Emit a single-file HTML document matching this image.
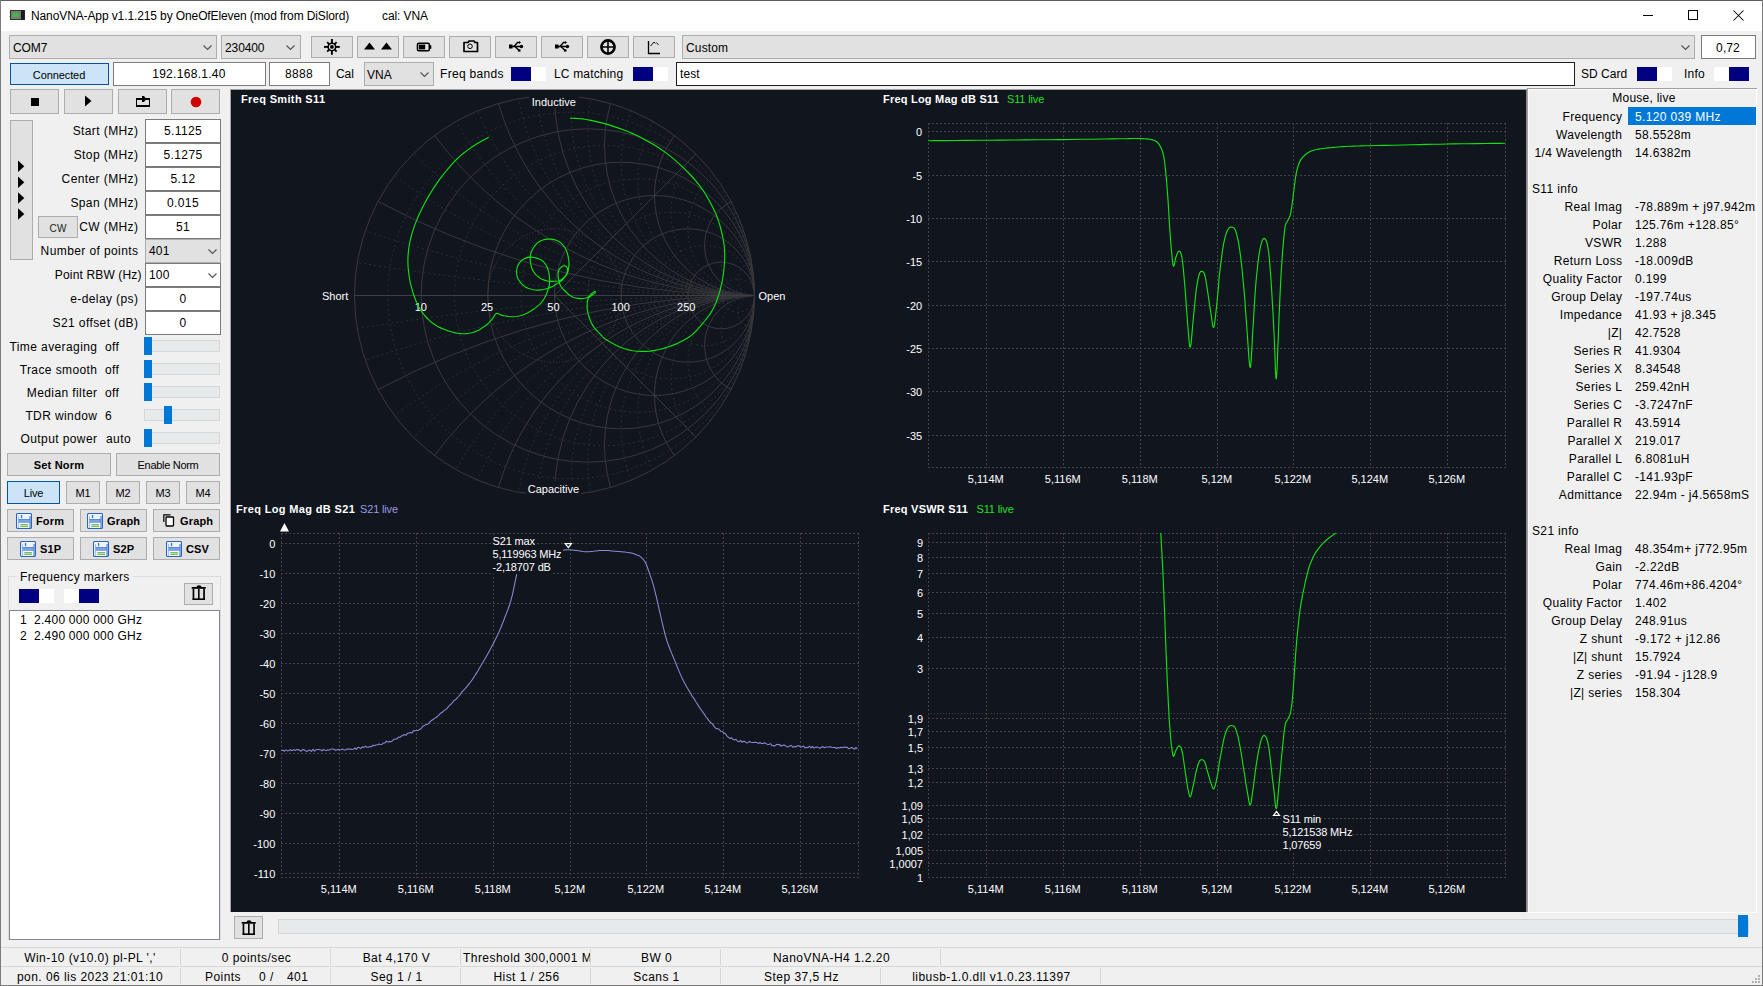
<!DOCTYPE html><html><head><meta charset="utf-8"><title>NanoVNA-App</title><style>html,body{margin:0;padding:0;width:1763px;height:986px;overflow:hidden;background:#f0f0f0}.t{position:absolute;white-space:pre;line-height:20px;font-family:'Liberation Sans',sans-serif;color:#000}.r{position:absolute;box-sizing:border-box}svg text{font-family:'Liberation Sans',sans-serif}</style></head><body>
<div class="r" style="left:0px;top:0px;width:1763px;height:986px;background:#f0f0f0;"></div>
<div class="r" style="left:1px;top:1px;width:1761px;height:30px;background:#fff;"></div>
<div class="r" style="left:0px;top:0px;width:1763px;height:1px;background:#5c5c5c;"></div>
<div class="r" style="left:0px;top:0px;width:1px;height:986px;background:#7b7b7b;"></div>
<div class="r" style="left:1762px;top:0px;width:1px;height:986px;background:#7b7b7b;"></div>
<div class="r" style="left:0px;top:985px;width:1763px;height:1px;background:#7b7b7b;"></div>
<svg class="r" style="left:9px;top:9px;" width="18" height="13" viewBox="0 0 18 13"><rect x="1.5" y="1.5" width="14" height="9" fill="#7a7a7a" stroke="#333" stroke-width="1"/><rect x="12" y="1.5" width="3.5" height="9" fill="#1a1a1a"/><path d="M3.5 8 L5 4 L6 8 L7.5 4 L8.5 8 L10 4" fill="none" stroke="#3fbf3f" stroke-width="1.2"/><rect x="0" y="3" width="1" height="1" fill="#d9c040"/><rect x="0" y="7" width="1" height="1" fill="#d9c040"/></svg>
<div class="t" style="left:31px;top:6px;font-size:12px;letter-spacing:-0.11px;">NanoVNA-App v1.1.215 by OneOfEleven (mod from DiSlord)</div>
<div class="t" style="left:382px;top:6px;font-size:12px;letter-spacing:-0.1px;">cal: VNA</div>
<svg class="r" style="left:1640px;top:8px;" width="110" height="16" viewBox="0 0 110 16"><rect x="3" y="7" width="10" height="1" fill="#000"/><rect x="48.5" y="2.5" width="9" height="9" fill="none" stroke="#000" stroke-width="1"/><path d="M93.5 2.5 L103.5 12.5 M103.5 2.5 L93.5 12.5" stroke="#000" stroke-width="1.05"/></svg>
<div class="r" style="left:9px;top:35px;width:208px;height:24px;background:#e1e1e1;border:1px solid #adadad;"></div>
<div class="t" style="left:13px;top:38px;font-size:12px;letter-spacing:-0.1px;">COM7</div>
<svg class="r" style="left:203px;top:45px" width="10" height="6"><polyline points="0.5,0.5 4.5,4.5 8.5,0.5" fill="none" stroke="#505050" stroke-width="1.1"/></svg>
<div class="r" style="left:221px;top:35px;width:80px;height:24px;background:#e1e1e1;border:1px solid #adadad;"></div>
<div class="t" style="left:225px;top:38px;font-size:12px;letter-spacing:-0.1px;">230400</div>
<svg class="r" style="left:286px;top:45px" width="10" height="6"><polyline points="0.5,0.5 4.5,4.5 8.5,0.5" fill="none" stroke="#505050" stroke-width="1.1"/></svg>
<div class="r" style="left:311px;top:36px;width:42px;height:22px;background:#e1e1e1;border:1px solid #adadad;"></div>
<div class="r" style="left:357px;top:36px;width:42px;height:22px;background:#e1e1e1;border:1px solid #adadad;"></div>
<div class="r" style="left:403px;top:36px;width:42px;height:22px;background:#e1e1e1;border:1px solid #adadad;"></div>
<div class="r" style="left:449px;top:36px;width:42px;height:22px;background:#e1e1e1;border:1px solid #adadad;"></div>
<div class="r" style="left:495px;top:36px;width:42px;height:22px;background:#e1e1e1;border:1px solid #adadad;"></div>
<div class="r" style="left:541px;top:36px;width:42px;height:22px;background:#e1e1e1;border:1px solid #adadad;"></div>
<div class="r" style="left:587px;top:36px;width:42px;height:22px;background:#e1e1e1;border:1px solid #adadad;"></div>
<div class="r" style="left:633px;top:36px;width:42px;height:22px;background:#e1e1e1;border:1px solid #adadad;"></div>
<svg class="r" style="left:311px;top:36px;" width="42" height="22" viewBox="0 0 42 22"><g transform="translate(20.9,10.9)"><rect x="-0.95" y="-7.9" width="1.9" height="4.6" fill="#000" transform="rotate(0)"/><rect x="-0.9" y="-6.7" width="1.8" height="3.4" fill="#000" transform="rotate(45)"/><rect x="-0.95" y="-7.9" width="1.9" height="4.6" fill="#000" transform="rotate(90)"/><rect x="-0.9" y="-6.7" width="1.8" height="3.4" fill="#000" transform="rotate(135)"/><rect x="-0.95" y="-7.9" width="1.9" height="4.6" fill="#000" transform="rotate(180)"/><rect x="-0.9" y="-6.7" width="1.8" height="3.4" fill="#000" transform="rotate(225)"/><rect x="-0.95" y="-7.9" width="1.9" height="4.6" fill="#000" transform="rotate(270)"/><rect x="-0.9" y="-6.7" width="1.8" height="3.4" fill="#000" transform="rotate(315)"/><circle r="3.75" fill="none" stroke="#000" stroke-width="1.5"/><circle r="1.9" fill="#000"/></g></svg>
<svg class="r" style="left:357px;top:36px;" width="42" height="22" viewBox="0 0 42 22"><path d="M7 13.5 L12.5 6.5 L18 13.5Z M24 13.5 L29.5 6.5 L35 13.5Z" fill="#000"/></svg>
<svg class="r" style="left:403px;top:36px;" width="42" height="22" viewBox="0 0 42 22"><rect x="14.5" y="7.2" width="11.8" height="7.6" rx="1.3" fill="none" stroke="#000" stroke-width="1.6"/><rect x="16" y="8.6" width="6.2" height="4.8" fill="#000"/><rect x="26.5" y="9.2" width="1.8" height="3.6" fill="#000"/></svg>
<svg class="r" style="left:449px;top:36px;" width="42" height="22" viewBox="0 0 42 22"><path d="M15 6.5 h4 l1 -1.5 h5 l1 1.5 h2.5 v9 h-13.5z" fill="none" stroke="#000" stroke-width="1.7" stroke-linejoin="round"/><circle cx="21" cy="10.3" r="2.3" fill="none" stroke="#000" stroke-width="1"/></svg>
<svg class="r" style="left:495px;top:36px;" width="42" height="22" viewBox="0 0 42 22"><rect x="14" y="8.5" width="3.5" height="4" fill="#000"/><path d="M17 10.5 H26" stroke="#000" stroke-width="1.6"/><circle cx="26.5" cy="10.5" r="1.7" fill="#000"/><path d="M19 10.5 L22.5 6.5 H24" fill="none" stroke="#000" stroke-width="1.3"/><path d="M24 5 L26 6.5 L24 8z" fill="#000"/><path d="M20 10.5 L24 14.5" fill="none" stroke="#000" stroke-width="1.5"/><rect x="23" y="13.3" width="2.5" height="2.3" fill="#000"/></svg>
<svg class="r" style="left:541px;top:36px;" width="42" height="22" viewBox="0 0 42 22"><rect x="14" y="8.5" width="3.5" height="4" fill="#000"/><path d="M17 10.5 H26" stroke="#000" stroke-width="1.6"/><circle cx="26.5" cy="10.5" r="1.7" fill="#000"/><path d="M19 10.5 L22.5 6.5 H24" fill="none" stroke="#000" stroke-width="1.3"/><path d="M24 5 L26 6.5 L24 8z" fill="#000"/><path d="M20 10.5 L24 14.5" fill="none" stroke="#000" stroke-width="1.5"/><rect x="23" y="13.3" width="2.5" height="2.3" fill="#000"/></svg>
<svg class="r" style="left:587px;top:36px;" width="42" height="22" viewBox="0 0 42 22"><circle cx="21" cy="11" r="6.6" fill="none" stroke="#000" stroke-width="2.6"/><path d="M21 4.5 V17.5 M14.5 11 H27.5" stroke="#000" stroke-width="1.6"/></svg>
<svg class="r" style="left:633px;top:36px;" width="42" height="22" viewBox="0 0 42 22"><path d="M15.5 5 V17.5 H27" fill="none" stroke="#000" stroke-width="1.3"/><path d="M17.5 10 L21 6 L22.5 7.5 M23.5 6.5 L25.5 9" fill="none" stroke="#000" stroke-width="0.9"/></svg>
<div class="r" style="left:682px;top:35px;width:1013px;height:24px;background:#e1e1e1;border:1px solid #adadad;"></div>
<div class="t" style="left:686px;top:38px;font-size:12px;letter-spacing:0.15px;">Custom</div>
<svg class="r" style="left:1681px;top:45px" width="10" height="6"><polyline points="0.5,0.5 4.5,4.5 8.5,0.5" fill="none" stroke="#505050" stroke-width="1.1"/></svg>
<div class="r" style="left:1701px;top:35px;width:55px;height:24px;background:#fff;border:1px solid #7a7a7a;"></div>
<div class="t" style="left:1528px;width:400px;text-align:center;top:38px;font-size:12px;letter-spacing:0.1px;">0,72</div>
<div class="r" style="left:10px;top:63px;width:99px;height:22px;background:#cce4f7;border:1px solid #0055a0;"></div>
<div class="t" style="left:-141px;width:400px;text-align:center;top:65px;font-size:11px;letter-spacing:-0.1px;">Connected</div>
<div class="r" style="left:113px;top:62px;width:153px;height:24px;background:#fff;border:1px solid #7a7a7a;"></div>
<div class="t" style="left:-11px;width:400px;text-align:center;top:64px;font-size:12px;letter-spacing:0.3px;">192.168.1.40</div>
<div class="r" style="left:269px;top:62px;width:61px;height:24px;background:#fff;border:1px solid #7a7a7a;"></div>
<div class="t" style="left:99px;width:400px;text-align:center;top:64px;font-size:12px;letter-spacing:0.3px;">8888</div>
<div class="t" style="left:336px;top:64px;font-size:12px;letter-spacing:-0.1px;">Cal</div>
<div class="r" style="left:364px;top:62px;width:70px;height:24px;background:#e1e1e1;border:1px solid #adadad;"></div>
<div class="t" style="left:367px;top:65px;font-size:12px;letter-spacing:0.1px;">VNA</div>
<svg class="r" style="left:420px;top:72px" width="10" height="6"><polyline points="0.5,0.5 4.5,4.5 8.5,0.5" fill="none" stroke="#505050" stroke-width="1.1"/></svg>
<div class="t" style="left:440px;top:64px;font-size:12px;letter-spacing:0.3px;">Freq bands</div>
<div class="r" style="left:511px;top:67px;width:20px;height:14px;background:#000080;"></div>
<div class="r" style="left:531px;top:67px;width:15px;height:14px;background:#fff;"></div>
<div class="t" style="left:554px;top:64px;font-size:12px;letter-spacing:0.17px;">LC matching</div>
<div class="r" style="left:633px;top:67px;width:20px;height:14px;background:#000080;"></div>
<div class="r" style="left:653px;top:67px;width:15px;height:14px;background:#fff;"></div>
<div class="r" style="left:676px;top:62px;width:899px;height:24px;background:#fff;border:1px solid #1e1e1e;"></div>
<div class="t" style="left:680px;top:64px;font-size:12px;letter-spacing:0.1px;">test</div>
<div class="t" style="left:1581px;top:64px;font-size:12px;letter-spacing:0.03px;">SD Card</div>
<div class="r" style="left:1637px;top:67px;width:20px;height:14px;background:#000080;"></div>
<div class="r" style="left:1657px;top:67px;width:15px;height:14px;background:#fff;"></div>
<div class="t" style="left:1684px;top:64px;font-size:12px;letter-spacing:0.2px;">Info</div>
<div class="r" style="left:1714px;top:67px;width:15px;height:14px;background:#fff;"></div>
<div class="r" style="left:1729px;top:67px;width:20px;height:14px;background:#000080;"></div>
<div class="r" style="left:10px;top:89px;width:49px;height:25px;background:#e1e1e1;border:1px solid #adadad;"></div>
<div class="r" style="left:64px;top:89px;width:49px;height:25px;background:#e1e1e1;border:1px solid #adadad;"></div>
<div class="r" style="left:118px;top:89px;width:49px;height:25px;background:#e1e1e1;border:1px solid #adadad;"></div>
<div class="r" style="left:171px;top:89px;width:49px;height:25px;background:#e1e1e1;border:1px solid #adadad;"></div>
<div class="r" style="left:31px;top:98px;width:8px;height:8px;background:#000;"></div>
<svg class="r" style="left:64px;top:89px;" width="49" height="25" viewBox="0 0 49 25"><path d="M21 6.5 L27.5 12 L21 17.5Z" fill="#000"/></svg>
<svg class="r" style="left:118px;top:89px;" width="49" height="25" viewBox="0 0 49 25"><rect x="18" y="9" width="14" height="2" fill="#000"/><rect x="18" y="16" width="14" height="2" fill="#000"/><rect x="18" y="9" width="1" height="9" fill="#000"/><rect x="31" y="9" width="1" height="9" fill="#000"/><path d="M24 7 H26 L27.5 9 V11 L26 13 H24Z" fill="#000"/></svg>
<svg class="r" style="left:171px;top:89px;" width="49" height="25" viewBox="0 0 49 25"><circle cx="25" cy="13" r="5.3" fill="#d00000"/></svg>
<div class="r" style="left:10px;top:120px;width:23px;height:140px;background:#e1e1e1;border:1px solid #adadad;"></div>
<svg class="r" style="left:10px;top:120px;" width="23" height="140" viewBox="0 0 23 140"><path d="M8 40.6 L14.3 46.35 L8 52.1Z" fill="#000"/><path d="M8 56.5 L14.3 62.25 L8 68.0Z" fill="#000"/><path d="M8 72.3 L14.3 78.05 L8 83.8Z" fill="#000"/><path d="M8 88.2 L14.3 93.95 L8 99.7Z" fill="#000"/></svg>
<div class="t" style="right:1625px;top:121px;font-size:12px;letter-spacing:0.4px;margin-right:-0.4px;">Start (MHz)</div>
<div class="r" style="left:145px;top:119px;width:76px;height:24px;background:#fff;border:1px solid #7a7a7a;"></div>
<div class="t" style="left:-17px;width:400px;text-align:center;top:121px;font-size:12px;letter-spacing:0.4px;">5.1125</div>
<div class="t" style="right:1625px;top:145px;font-size:12px;letter-spacing:0.4px;margin-right:-0.4px;">Stop (MHz)</div>
<div class="r" style="left:145px;top:143px;width:76px;height:24px;background:#fff;border:1px solid #7a7a7a;"></div>
<div class="t" style="left:-17px;width:400px;text-align:center;top:145px;font-size:12px;letter-spacing:0.4px;">5.1275</div>
<div class="t" style="right:1625px;top:169px;font-size:12px;letter-spacing:0.4px;margin-right:-0.4px;">Center (MHz)</div>
<div class="r" style="left:145px;top:167px;width:76px;height:24px;background:#fff;border:1px solid #7a7a7a;"></div>
<div class="t" style="left:-17px;width:400px;text-align:center;top:169px;font-size:12px;letter-spacing:0.4px;">5.12</div>
<div class="t" style="right:1625px;top:193px;font-size:12px;letter-spacing:0.4px;margin-right:-0.4px;">Span (MHz)</div>
<div class="r" style="left:145px;top:191px;width:76px;height:24px;background:#fff;border:1px solid #7a7a7a;"></div>
<div class="t" style="left:-17px;width:400px;text-align:center;top:193px;font-size:12px;letter-spacing:0.4px;">0.015</div>
<div class="t" style="right:1625px;top:217px;font-size:12px;letter-spacing:0.4px;margin-right:-0.4px;">CW (MHz)</div>
<div class="r" style="left:145px;top:215px;width:76px;height:24px;background:#fff;border:1px solid #7a7a7a;"></div>
<div class="t" style="left:-17px;width:400px;text-align:center;top:217px;font-size:12px;letter-spacing:0.4px;">51</div>
<div class="t" style="right:1625px;top:241px;font-size:12px;letter-spacing:0.4px;margin-right:-0.4px;">Number of points</div>
<div class="r" style="left:145px;top:239px;width:76px;height:24px;background:#e1e1e1;border:1px solid #adadad;"></div>
<div class="t" style="left:149px;top:241px;font-size:12px;letter-spacing:0.2px;">401</div>
<svg class="r" style="left:208px;top:249px" width="10" height="6"><polyline points="0.5,0.5 4.5,4.5 8.5,0.5" fill="none" stroke="#505050" stroke-width="1.1"/></svg>
<div class="t" style="right:1621.5px;top:265px;font-size:12px;letter-spacing:0.15px;margin-right:-0.15px;">Point RBW (Hz)</div>
<div class="r" style="left:145px;top:263px;width:76px;height:24px;background:#fff;border:1px solid #7a7a7a;"></div>
<div class="t" style="left:149px;top:265px;font-size:12px;letter-spacing:0.2px;">100</div>
<svg class="r" style="left:208px;top:273px" width="10" height="6"><polyline points="0.5,0.5 4.5,4.5 8.5,0.5" fill="none" stroke="#505050" stroke-width="1.1"/></svg>
<div class="t" style="right:1625px;top:289px;font-size:12px;letter-spacing:0.4px;margin-right:-0.4px;">e-delay (ps)</div>
<div class="r" style="left:145px;top:287px;width:76px;height:24px;background:#fff;border:1px solid #7a7a7a;"></div>
<div class="t" style="left:-17px;width:400px;text-align:center;top:289px;font-size:12px;letter-spacing:0.4px;">0</div>
<div class="t" style="right:1625px;top:313px;font-size:12px;letter-spacing:0.4px;margin-right:-0.4px;">S21 offset (dB)</div>
<div class="r" style="left:145px;top:311px;width:76px;height:24px;background:#fff;border:1px solid #7a7a7a;"></div>
<div class="t" style="left:-17px;width:400px;text-align:center;top:313px;font-size:12px;letter-spacing:0.4px;">0</div>
<div class="r" style="left:38px;top:216px;width:40px;height:22px;background:#e1e1e1;border:1px solid #adadad;"></div>
<div class="t" style="left:-142px;width:400px;text-align:center;top:219px;font-size:10px;letter-spacing:0.2px;color:#1a1a1a;">CW</div>
<div class="t" style="right:1666px;top:337px;font-size:12px;letter-spacing:0.4px;margin-right:-0.4px;">Time averaging</div>
<div class="t" style="left:105px;top:337px;font-size:12px;letter-spacing:0.4px;">off</div>
<div class="r" style="left:144px;top:340px;width:76px;height:12px;background:#e7eaea;border:1px solid #d6d6d6;"></div>
<div class="r" style="left:144px;top:337px;width:8px;height:18px;background:#0078d7;"></div>
<div class="t" style="right:1666px;top:360px;font-size:12px;letter-spacing:0.4px;margin-right:-0.4px;">Trace smooth</div>
<div class="t" style="left:105px;top:360px;font-size:12px;letter-spacing:0.4px;">off</div>
<div class="r" style="left:144px;top:363px;width:76px;height:12px;background:#e7eaea;border:1px solid #d6d6d6;"></div>
<div class="r" style="left:144px;top:360px;width:8px;height:18px;background:#0078d7;"></div>
<div class="t" style="right:1666px;top:383px;font-size:12px;letter-spacing:0.4px;margin-right:-0.4px;">Median filter</div>
<div class="t" style="left:105px;top:383px;font-size:12px;letter-spacing:0.4px;">off</div>
<div class="r" style="left:144px;top:386px;width:76px;height:12px;background:#e7eaea;border:1px solid #d6d6d6;"></div>
<div class="r" style="left:144px;top:383px;width:8px;height:18px;background:#0078d7;"></div>
<div class="t" style="right:1666px;top:406px;font-size:12px;letter-spacing:0.4px;margin-right:-0.4px;">TDR window</div>
<div class="t" style="left:105px;top:406px;font-size:12px;letter-spacing:0.4px;">6</div>
<div class="r" style="left:144px;top:409px;width:76px;height:12px;background:#e7eaea;border:1px solid #d6d6d6;"></div>
<div class="r" style="left:164px;top:406px;width:8px;height:18px;background:#0078d7;"></div>
<div class="t" style="right:1666px;top:429px;font-size:12px;letter-spacing:0.4px;margin-right:-0.4px;">Output power</div>
<div class="t" style="left:106px;top:429px;font-size:12px;letter-spacing:0.4px;">auto</div>
<div class="r" style="left:144px;top:432px;width:76px;height:12px;background:#e7eaea;border:1px solid #d6d6d6;"></div>
<div class="r" style="left:144px;top:429px;width:8px;height:18px;background:#0078d7;"></div>
<div class="r" style="left:7px;top:453px;width:104px;height:23px;background:#e1e1e1;border:1px solid #adadad;"></div>
<div class="t" style="left:-141px;width:400px;text-align:center;top:455px;font-size:11px;letter-spacing:0.2px;font-weight:bold;">Set Norm</div>
<div class="r" style="left:116px;top:453px;width:104px;height:23px;background:#e1e1e1;border:1px solid #adadad;"></div>
<div class="t" style="left:-32px;width:400px;text-align:center;top:455px;font-size:11px;letter-spacing:-0.3px;">Enable Norm</div>
<div class="r" style="left:7px;top:481px;width:53px;height:23px;background:#cce4f7;border:1px solid #0055a0;"></div>
<div class="t" style="left:-166.5px;width:400px;text-align:center;top:483px;font-size:11px;letter-spacing:-0.2px;">Live</div>
<div class="r" style="left:66px;top:481px;width:34px;height:23px;background:#e1e1e1;border:1px solid #adadad;"></div>
<div class="t" style="left:-117px;width:400px;text-align:center;top:483px;font-size:11px;letter-spacing:-0.2px;">M1</div>
<div class="r" style="left:106px;top:481px;width:34px;height:23px;background:#e1e1e1;border:1px solid #adadad;"></div>
<div class="t" style="left:-77px;width:400px;text-align:center;top:483px;font-size:11px;letter-spacing:-0.2px;">M2</div>
<div class="r" style="left:146px;top:481px;width:34px;height:23px;background:#e1e1e1;border:1px solid #adadad;"></div>
<div class="t" style="left:-37px;width:400px;text-align:center;top:483px;font-size:11px;letter-spacing:-0.2px;">M3</div>
<div class="r" style="left:186px;top:481px;width:34px;height:23px;background:#e1e1e1;border:1px solid #adadad;"></div>
<div class="t" style="left:3px;width:400px;text-align:center;top:483px;font-size:11px;letter-spacing:-0.2px;">M4</div>
<div class="r" style="left:7px;top:509px;width:67px;height:23px;background:#e1e1e1;border:1px solid #adadad;"></div>
<svg class="r" style="left:16px;top:513px;" width="16" height="16" viewBox="0 0 16 16"><rect x="0.5" y="0.5" width="15" height="15" rx="1.2" fill="#eef5fe" stroke="#2a64c0" stroke-width="1.1"/><rect x="2" y="3" width="1" height="12" fill="#a6c4f0"/><rect x="4.9" y="2" width="1.3" height="3.2" fill="#3a72d0"/><rect x="2.5" y="6.1" width="11.5" height="3.8" fill="#78a2e6"/><rect x="2.5" y="6.1" width="11.5" height="0.9" fill="#5a86d0"/><rect x="4" y="10" width="9.5" height="5" fill="#fff"/><rect x="4.3" y="11" width="7.8" height="1.1" fill="#7cc04a"/><rect x="4.3" y="13" width="7.8" height="1.1" fill="#7cc04a"/><rect x="4.3" y="12.1" width="7.8" height="0.9" fill="#b0cdf2"/><rect x="13.4" y="3" width="1.3" height="12" fill="#5a86d0"/></svg>
<div class="t" style="left:36px;top:511px;font-size:11px;letter-spacing:0.15px;font-weight:bold;">Form</div>
<div class="r" style="left:80px;top:509px;width:67px;height:23px;background:#e1e1e1;border:1px solid #adadad;"></div>
<svg class="r" style="left:87px;top:513px;" width="16" height="16" viewBox="0 0 16 16"><rect x="0.5" y="0.5" width="15" height="15" rx="1.2" fill="#eef5fe" stroke="#2a64c0" stroke-width="1.1"/><rect x="2" y="3" width="1" height="12" fill="#a6c4f0"/><rect x="4.9" y="2" width="1.3" height="3.2" fill="#3a72d0"/><rect x="2.5" y="6.1" width="11.5" height="3.8" fill="#78a2e6"/><rect x="2.5" y="6.1" width="11.5" height="0.9" fill="#5a86d0"/><rect x="4" y="10" width="9.5" height="5" fill="#fff"/><rect x="4.3" y="11" width="7.8" height="1.1" fill="#7cc04a"/><rect x="4.3" y="13" width="7.8" height="1.1" fill="#7cc04a"/><rect x="4.3" y="12.1" width="7.8" height="0.9" fill="#b0cdf2"/><rect x="13.4" y="3" width="1.3" height="12" fill="#5a86d0"/></svg>
<div class="t" style="left:107px;top:511px;font-size:11px;letter-spacing:0.15px;font-weight:bold;">Graph</div>
<div class="r" style="left:153px;top:509px;width:67px;height:23px;background:#e1e1e1;border:1px solid #adadad;"></div>
<svg class="r" style="left:163px;top:514px;" width="12" height="13" viewBox="0 0 12 13"><path d="M0.8 8 V0.8 H7.5" fill="none" stroke="#000" stroke-width="1.2"/><rect x="3" y="3" width="7.5" height="9" rx="0.8" fill="#fff" stroke="#000" stroke-width="1.3"/></svg>
<div class="t" style="left:180px;top:511px;font-size:11px;letter-spacing:0.15px;font-weight:bold;">Graph</div>
<div class="r" style="left:7px;top:537px;width:67px;height:23px;background:#e1e1e1;border:1px solid #adadad;"></div>
<svg class="r" style="left:20px;top:541px;" width="16" height="16" viewBox="0 0 16 16"><rect x="0.5" y="0.5" width="15" height="15" rx="1.2" fill="#eef5fe" stroke="#2a64c0" stroke-width="1.1"/><rect x="2" y="3" width="1" height="12" fill="#a6c4f0"/><rect x="4.9" y="2" width="1.3" height="3.2" fill="#3a72d0"/><rect x="2.5" y="6.1" width="11.5" height="3.8" fill="#78a2e6"/><rect x="2.5" y="6.1" width="11.5" height="0.9" fill="#5a86d0"/><rect x="4" y="10" width="9.5" height="5" fill="#fff"/><rect x="4.3" y="11" width="7.8" height="1.1" fill="#7cc04a"/><rect x="4.3" y="13" width="7.8" height="1.1" fill="#7cc04a"/><rect x="4.3" y="12.1" width="7.8" height="0.9" fill="#b0cdf2"/><rect x="13.4" y="3" width="1.3" height="12" fill="#5a86d0"/></svg>
<div class="t" style="left:40px;top:539px;font-size:11px;letter-spacing:0.15px;font-weight:bold;">S1P</div>
<div class="r" style="left:80px;top:537px;width:67px;height:23px;background:#e1e1e1;border:1px solid #adadad;"></div>
<svg class="r" style="left:93px;top:541px;" width="16" height="16" viewBox="0 0 16 16"><rect x="0.5" y="0.5" width="15" height="15" rx="1.2" fill="#eef5fe" stroke="#2a64c0" stroke-width="1.1"/><rect x="2" y="3" width="1" height="12" fill="#a6c4f0"/><rect x="4.9" y="2" width="1.3" height="3.2" fill="#3a72d0"/><rect x="2.5" y="6.1" width="11.5" height="3.8" fill="#78a2e6"/><rect x="2.5" y="6.1" width="11.5" height="0.9" fill="#5a86d0"/><rect x="4" y="10" width="9.5" height="5" fill="#fff"/><rect x="4.3" y="11" width="7.8" height="1.1" fill="#7cc04a"/><rect x="4.3" y="13" width="7.8" height="1.1" fill="#7cc04a"/><rect x="4.3" y="12.1" width="7.8" height="0.9" fill="#b0cdf2"/><rect x="13.4" y="3" width="1.3" height="12" fill="#5a86d0"/></svg>
<div class="t" style="left:113px;top:539px;font-size:11px;letter-spacing:0.15px;font-weight:bold;">S2P</div>
<div class="r" style="left:153px;top:537px;width:67px;height:23px;background:#e1e1e1;border:1px solid #adadad;"></div>
<svg class="r" style="left:166px;top:541px;" width="16" height="16" viewBox="0 0 16 16"><rect x="0.5" y="0.5" width="15" height="15" rx="1.2" fill="#eef5fe" stroke="#2a64c0" stroke-width="1.1"/><rect x="2" y="3" width="1" height="12" fill="#a6c4f0"/><rect x="4.9" y="2" width="1.3" height="3.2" fill="#3a72d0"/><rect x="2.5" y="6.1" width="11.5" height="3.8" fill="#78a2e6"/><rect x="2.5" y="6.1" width="11.5" height="0.9" fill="#5a86d0"/><rect x="4" y="10" width="9.5" height="5" fill="#fff"/><rect x="4.3" y="11" width="7.8" height="1.1" fill="#7cc04a"/><rect x="4.3" y="13" width="7.8" height="1.1" fill="#7cc04a"/><rect x="4.3" y="12.1" width="7.8" height="0.9" fill="#b0cdf2"/><rect x="13.4" y="3" width="1.3" height="12" fill="#5a86d0"/></svg>
<div class="t" style="left:186px;top:539px;font-size:11px;letter-spacing:0.15px;font-weight:bold;">CSV</div>
<div class="r" style="left:8px;top:576px;width:213px;height:364px;border:1px solid #dcdcdc;"></div>
<div class="r" style="left:17px;top:570px;width:116px;height:14px;background:#f0f0f0;"></div>
<div class="t" style="left:20px;top:567px;font-size:12px;letter-spacing:0.37px;">Frequency markers</div>
<div class="r" style="left:19px;top:589px;width:20px;height:14px;background:#000080;"></div>
<div class="r" style="left:39px;top:589px;width:15px;height:14px;background:#fff;"></div>
<div class="r" style="left:64px;top:589px;width:15px;height:14px;background:#fff;"></div>
<div class="r" style="left:79px;top:589px;width:20px;height:14px;background:#000080;"></div>
<div class="r" style="left:184px;top:583px;width:29px;height:22px;background:#e1e1e1;border:1px solid #adadad;"></div>
<svg class="r" style="left:189px;top:584px;" width="19" height="18" viewBox="0 0 19 18"><path d="M7.5 3 Q7.5 1.2 10 1.2 Q12.5 1.2 12.5 3Z" fill="#000"/><rect x="2.7" y="3" width="14" height="1.8" fill="#000"/><rect x="3.6" y="5" width="1.7" height="11" fill="#000"/><rect x="9" y="5" width="1.6" height="11" fill="#000"/><rect x="14.2" y="5" width="1.7" height="11" fill="#000"/><rect x="3.6" y="14.4" width="12.3" height="1.6" fill="#000"/></svg>
<div class="r" style="left:9px;top:610px;width:211px;height:330px;background:#fff;border:1px solid #828790;"></div>
<div class="t" style="left:20px;top:610px;font-size:12px;letter-spacing:0.24px;">1  2.400 000 000 GHz</div>
<div class="t" style="left:20px;top:626px;font-size:12px;letter-spacing:0.24px;">2  2.490 000 000 GHz</div>
<div class="r" style="left:230px;top:89px;width:1297px;height:823px;background:#11151e;"></div>
<div class="r" style="left:230px;top:89px;width:1297px;height:1px;background:#a0a0a0;"></div>
<div class="r" style="left:230px;top:89px;width:1px;height:823px;background:#a0a0a0;"></div>
<div class="r" style="left:1526px;top:89px;width:1px;height:823px;background:#8a8a8a;"></div>
<svg class="r" style="left:230px;top:89px" width="1297" height="823" viewBox="230 89 1297 823"><clipPath id="sc"><circle cx="554.5" cy="295.5" r="200.5"/></clipPath><g clip-path="url(#sc)"><circle cx="571.17" cy="295.5" r="183.33" fill="none" stroke="#303136" stroke-width="1" stroke-dasharray="2 3"/><circle cx="587.83" cy="295.5" r="166.67" fill="none" stroke="#38393d" stroke-width="1"/><circle cx="604.50" cy="295.5" r="150.00" fill="none" stroke="#303136" stroke-width="1" stroke-dasharray="2 3"/><circle cx="621.17" cy="295.5" r="133.33" fill="none" stroke="#38393d" stroke-width="1"/><circle cx="637.83" cy="295.5" r="116.67" fill="none" stroke="#303136" stroke-width="1" stroke-dasharray="2 3"/><circle cx="654.50" cy="295.5" r="100.00" fill="none" stroke="#38393d" stroke-width="1"/><circle cx="671.17" cy="295.5" r="83.33" fill="none" stroke="#303136" stroke-width="1" stroke-dasharray="2 3"/><circle cx="687.83" cy="295.5" r="66.67" fill="none" stroke="#38393d" stroke-width="1"/><circle cx="704.50" cy="295.5" r="50.00" fill="none" stroke="#303136" stroke-width="1" stroke-dasharray="2 3"/><circle cx="721.17" cy="295.5" r="33.33" fill="none" stroke="#38393d" stroke-width="1"/><circle cx="737.83" cy="295.5" r="16.67" fill="none" stroke="#303136" stroke-width="1" stroke-dasharray="2 3"/><circle cx="754.5" cy="-2104.50" r="2400.00" fill="none" stroke="#303136" stroke-width="1" stroke-dasharray="2 3"/><circle cx="754.5" cy="2695.50" r="2400.00" fill="none" stroke="#303136" stroke-width="1" stroke-dasharray="2 3"/><circle cx="754.5" cy="-904.50" r="1200.00" fill="none" stroke="#303136" stroke-width="1" stroke-dasharray="2 3"/><circle cx="754.5" cy="1495.50" r="1200.00" fill="none" stroke="#303136" stroke-width="1" stroke-dasharray="2 3"/><circle cx="754.5" cy="-504.50" r="800.00" fill="none" stroke="#38393d" stroke-width="1" /><circle cx="754.5" cy="1095.50" r="800.00" fill="none" stroke="#38393d" stroke-width="1" /><circle cx="754.5" cy="-304.50" r="600.00" fill="none" stroke="#303136" stroke-width="1" stroke-dasharray="2 3"/><circle cx="754.5" cy="895.50" r="600.00" fill="none" stroke="#303136" stroke-width="1" stroke-dasharray="2 3"/><circle cx="754.5" cy="-184.50" r="480.00" fill="none" stroke="#303136" stroke-width="1" stroke-dasharray="2 3"/><circle cx="754.5" cy="775.50" r="480.00" fill="none" stroke="#303136" stroke-width="1" stroke-dasharray="2 3"/><circle cx="754.5" cy="-104.50" r="400.00" fill="none" stroke="#38393d" stroke-width="1" /><circle cx="754.5" cy="695.50" r="400.00" fill="none" stroke="#38393d" stroke-width="1" /><circle cx="754.5" cy="-47.36" r="342.86" fill="none" stroke="#303136" stroke-width="1" stroke-dasharray="2 3"/><circle cx="754.5" cy="638.36" r="342.86" fill="none" stroke="#303136" stroke-width="1" stroke-dasharray="2 3"/><circle cx="754.5" cy="-4.50" r="300.00" fill="none" stroke="#303136" stroke-width="1" stroke-dasharray="2 3"/><circle cx="754.5" cy="595.50" r="300.00" fill="none" stroke="#303136" stroke-width="1" stroke-dasharray="2 3"/><circle cx="754.5" cy="28.83" r="266.67" fill="none" stroke="#38393d" stroke-width="1" /><circle cx="754.5" cy="562.17" r="266.67" fill="none" stroke="#38393d" stroke-width="1" /><circle cx="754.5" cy="55.50" r="240.00" fill="none" stroke="#303136" stroke-width="1" stroke-dasharray="2 3"/><circle cx="754.5" cy="535.50" r="240.00" fill="none" stroke="#303136" stroke-width="1" stroke-dasharray="2 3"/><circle cx="754.5" cy="77.32" r="218.18" fill="none" stroke="#303136" stroke-width="1" stroke-dasharray="2 3"/><circle cx="754.5" cy="513.68" r="218.18" fill="none" stroke="#303136" stroke-width="1" stroke-dasharray="2 3"/><circle cx="754.5" cy="95.50" r="200.00" fill="none" stroke="#38393d" stroke-width="1" /><circle cx="754.5" cy="495.50" r="200.00" fill="none" stroke="#38393d" stroke-width="1" /><circle cx="754.5" cy="112.17" r="183.33" fill="none" stroke="#303136" stroke-width="1" stroke-dasharray="2 3"/><circle cx="754.5" cy="478.83" r="183.33" fill="none" stroke="#303136" stroke-width="1" stroke-dasharray="2 3"/><circle cx="754.5" cy="128.83" r="166.67" fill="none" stroke="#303136" stroke-width="1" stroke-dasharray="2 3"/><circle cx="754.5" cy="462.17" r="166.67" fill="none" stroke="#303136" stroke-width="1" stroke-dasharray="2 3"/><circle cx="754.5" cy="145.50" r="150.00" fill="none" stroke="#38393d" stroke-width="1" /><circle cx="754.5" cy="445.50" r="150.00" fill="none" stroke="#38393d" stroke-width="1" /><circle cx="754.5" cy="162.17" r="133.33" fill="none" stroke="#303136" stroke-width="1" stroke-dasharray="2 3"/><circle cx="754.5" cy="428.83" r="133.33" fill="none" stroke="#303136" stroke-width="1" stroke-dasharray="2 3"/><circle cx="754.5" cy="178.83" r="116.67" fill="none" stroke="#303136" stroke-width="1" stroke-dasharray="2 3"/><circle cx="754.5" cy="412.17" r="116.67" fill="none" stroke="#303136" stroke-width="1" stroke-dasharray="2 3"/><circle cx="754.5" cy="195.50" r="100.00" fill="none" stroke="#38393d" stroke-width="1" /><circle cx="754.5" cy="395.50" r="100.00" fill="none" stroke="#38393d" stroke-width="1" /><circle cx="754.5" cy="212.17" r="83.33" fill="none" stroke="#303136" stroke-width="1" stroke-dasharray="2 3"/><circle cx="754.5" cy="378.83" r="83.33" fill="none" stroke="#303136" stroke-width="1" stroke-dasharray="2 3"/><circle cx="754.5" cy="228.83" r="66.67" fill="none" stroke="#303136" stroke-width="1" stroke-dasharray="2 3"/><circle cx="754.5" cy="362.17" r="66.67" fill="none" stroke="#303136" stroke-width="1" stroke-dasharray="2 3"/><circle cx="754.5" cy="245.50" r="50.00" fill="none" stroke="#38393d" stroke-width="1" /><circle cx="754.5" cy="345.50" r="50.00" fill="none" stroke="#38393d" stroke-width="1" /><circle cx="754.5" cy="262.17" r="33.33" fill="none" stroke="#303136" stroke-width="1" stroke-dasharray="2 3"/><circle cx="754.5" cy="328.83" r="33.33" fill="none" stroke="#303136" stroke-width="1" stroke-dasharray="2 3"/><circle cx="754.5" cy="278.83" r="16.67" fill="none" stroke="#303136" stroke-width="1" stroke-dasharray="2 3"/><circle cx="754.5" cy="312.17" r="16.67" fill="none" stroke="#303136" stroke-width="1" stroke-dasharray="2 3"/><path d="M554.5 295.5 L695.9 154.1 M554.5 295.5 L695.9 436.9" stroke="#38393d" stroke-width="1"/></g><circle cx="554.5" cy="295.5" r="200" fill="none" stroke="#38393d" stroke-width="1"/><line x1="354.5" y1="295.5" x2="754.5" y2="295.5" stroke="#3e3e43" stroke-width="1"/><circle cx="554.5" cy="295.5" r="66.7" fill="none" stroke="#4e4038" stroke-width="1" stroke-dasharray="1 2"/><rect x="529" y="94" width="50" height="14" fill="#11151e"/><text x="553.8" y="106" font-size="11" fill="#fff" text-anchor="middle" >Inductive</text><rect x="526" y="481" width="55" height="15" fill="#11151e"/><text x="553.5" y="493" font-size="11" fill="#fff" text-anchor="middle" >Capacitive</text><text x="348.3" y="300" font-size="11" fill="#fff" text-anchor="end" >Short</text><text x="758.5" y="300" font-size="11" fill="#fff" >Open</text><text x="420.8" y="311" font-size="11" fill="#fff" text-anchor="middle" >10</text><text x="487" y="311" font-size="11" fill="#fff" text-anchor="middle" >25</text><text x="553.4" y="311" font-size="11" fill="#fff" text-anchor="middle" >50</text><text x="620.6" y="311" font-size="11" fill="#fff" text-anchor="middle" >100</text><text x="686.3" y="311" font-size="11" fill="#fff" text-anchor="middle" >250</text><text x="241" y="103" font-size="11" fill="#fff" font-weight="bold" letter-spacing="0.35" >Freq Smith S11</text><polyline points="488.7,137.3 486.6,138.5 483.6,140.1 480.1,142.0 476.5,144.1 473.1,146.2 470.0,148.4 466.9,150.6 463.7,153.0 460.6,155.6 457.5,158.5 454.3,161.7 451.2,165.1 448.0,168.8 444.9,172.5 441.9,176.3 439.0,180.1 436.3,184.1 433.6,188.1 431.0,192.2 428.5,196.4 426.0,200.8 423.6,205.3 421.4,209.8 419.2,214.3 417.3,218.7 415.6,222.9 414.1,226.9 412.8,230.9 411.6,234.8 410.6,238.8 409.7,242.8 409.0,246.8 408.5,250.9 408.1,254.9 407.9,258.9 407.9,263.0 408.1,267.1 408.5,271.1 409.0,275.1 409.6,279.0 410.3,282.7 411.2,286.4 412.2,289.9 413.2,293.3 414.3,296.5 415.4,299.5 416.5,302.3 417.7,305.0 419.1,307.6 420.7,310.2 422.6,312.8 424.7,315.5 427.0,318.0 429.4,320.4 431.8,322.5 434.3,324.3 436.9,325.9 439.6,327.4 442.3,328.6 445.2,329.8 448.2,330.9 451.4,331.8 454.6,332.6 457.8,333.2 460.8,333.6 463.7,333.7 466.4,333.6 469.1,333.2 471.7,332.7 474.2,332.0 476.7,331.1 479.1,329.9 481.3,328.5 483.5,327.1 485.4,325.8 487.1,324.5 488.5,323.1 489.8,321.7 491.0,320.4 492.1,319.1 493.1,317.8 494.0,316.4 494.7,315.1 495.6,314.1 496.5,313.5 497.5,313.4 498.5,313.7 499.5,314.3 500.8,314.9 502.3,315.4 504.2,315.8 506.4,316.1 508.8,316.5 511.2,316.7 513.5,316.7 515.7,316.5 517.9,316.2 520.2,315.7 522.4,315.0 524.6,314.2 526.9,313.2 529.2,311.9 531.6,310.5 533.8,309.1 535.8,307.6 537.6,306.1 539.3,304.6 540.9,303.1 542.3,301.4 543.6,299.7 544.7,297.8 545.7,295.8 546.6,293.7 547.3,291.7 548.0,289.7 548.6,287.9 549.0,286.2 549.4,284.5 549.6,282.7 549.7,280.8 549.6,278.7 549.4,276.3 549.0,273.9 548.6,271.7 548.0,269.6 547.3,267.8 546.6,266.0 545.7,264.5 544.7,263.1 543.6,261.8 542.3,260.7 540.7,259.8 539.1,259.0 537.4,258.4 535.8,257.9 534.2,257.5 532.7,257.2 531.1,257.1 529.6,257.1 528.0,257.4 526.4,257.9 524.7,258.6 523.0,259.6 521.5,260.6 520.2,261.8 519.2,263.1 518.3,264.6 517.6,266.2 517.1,267.9 516.8,269.6 516.6,271.3 516.6,273.1 516.8,275.0 517.2,276.8 517.9,278.5 518.8,280.2 520.1,282.0 521.5,283.6 523.0,285.1 524.6,286.4 526.2,287.4 528.0,288.2 529.8,288.8 531.7,289.3 533.5,289.7 535.3,290.0 537.1,290.1 538.9,290.1 540.7,289.9 542.5,289.7 544.3,289.3 546.2,288.8 548.0,288.2 549.8,287.6 551.4,286.9 552.9,286.2 554.3,285.4 555.7,284.6 556.9,283.8 558.1,283.0 559.1,282.3 560.1,281.7 560.9,281.2 561.7,280.5 562.6,279.7 563.5,278.7 564.5,277.7 565.4,276.5 566.3,275.3 567.0,274.1 567.5,272.8 568.0,271.6 568.3,270.2 568.5,268.8 568.7,267.4 568.9,265.9 569.0,264.5 569.0,262.9 568.9,261.3 568.7,259.6 568.4,257.7 568.0,255.6 567.4,253.5 566.8,251.4 565.9,249.5 564.9,247.7 563.7,246.0 562.3,244.3 560.8,242.9 559.2,241.7 557.4,240.7 555.4,240.0 553.4,239.4 551.3,239.1 549.2,239.0 547.1,239.1 545.0,239.4 542.9,240.0 540.9,240.7 539.1,241.7 537.5,242.9 536.0,244.4 534.6,246.0 533.4,247.8 532.4,249.5 531.6,251.2 531.0,252.9 530.5,254.7 530.3,256.5 530.2,258.5 530.3,260.6 530.5,262.9 531.0,265.3 531.6,267.6 532.4,269.6 533.4,271.4 534.7,273.2 536.1,274.8 537.6,276.2 539.1,277.4 540.6,278.4 542.2,279.2 543.8,279.9 545.4,280.4 546.9,280.8 548.3,281.1 549.7,281.3 551.0,281.4 552.3,281.3 553.6,281.3 555.0,281.2 556.3,281.2 557.7,281.0 559.0,280.7 560.3,280.2 561.6,279.5 562.8,278.5 564.0,277.4 565.0,276.3 565.9,275.2 566.5,274.1 567.0,272.9 567.4,271.7 567.5,270.6 567.6,269.6 567.5,268.7 567.2,268.0 566.9,267.3 566.4,266.7 565.9,266.3 565.3,266.0 564.7,265.9 564.0,265.9 563.3,266.0 562.6,266.3 561.9,266.7 561.1,267.3 560.4,268.0 559.7,268.7 559.2,269.6 558.8,270.5 558.5,271.5 558.2,272.6 558.1,273.8 558.1,275.2 558.2,276.8 558.5,278.7 558.8,280.6 559.3,282.5 559.8,284.1 560.4,285.4 561.0,286.5 561.8,287.5 562.6,288.6 563.7,289.7 565.0,291.0 566.5,292.5 568.1,294.0 569.8,295.3 571.5,296.4 573.2,297.2 575.1,297.8 576.9,298.2 578.7,298.4 580.4,298.6 581.9,298.6 583.3,298.5 584.7,298.3 585.9,298.0 587.1,297.5 588.2,296.9 589.1,296.1 590.0,295.2 590.8,294.3 591.6,293.6 592.4,293.0 593.2,292.4 593.9,291.9 594.5,291.6 594.9,291.4 595.2,291.4 595.4,291.7 595.4,292.0 595.2,292.5 594.9,293.0 594.3,293.6 593.3,294.3 592.3,295.0 591.2,295.8 590.4,296.4 589.8,296.8 589.3,297.2 588.9,297.5 588.5,297.9 588.2,298.6 587.9,299.6 587.6,300.9 587.3,302.2 587.2,303.7 587.1,305.3 587.1,306.9 587.2,308.6 587.4,310.4 587.7,312.2 588.2,314.2 588.8,316.3 589.6,318.6 590.5,321.0 591.5,323.3 592.7,325.4 594.1,327.4 595.7,329.3 597.4,331.1 599.0,332.8 600.5,334.3 601.6,335.5 602.3,336.5 603.0,337.4 604.2,338.3 606.1,339.6 608.9,341.3 612.4,343.3 616.4,345.4 620.5,347.3 624.6,348.8 628.6,349.9 632.8,350.7 637.0,351.2 641.4,351.4 645.7,351.4 650.1,351.1 654.6,350.4 659.2,349.5 663.7,348.4 668.1,347.0 672.5,345.4 677.0,343.6 681.3,341.5 685.4,339.3 689.1,337.0 692.3,334.6 695.1,332.0 697.6,329.3 700.0,326.6 702.3,323.8 704.7,321.0 706.9,318.2 709.1,315.4 711.1,312.4 712.9,309.3 714.5,306.1 716.0,302.7 717.2,299.2 718.4,295.7 719.5,292.1 720.5,288.5 721.4,285.0 722.2,281.3 722.8,277.6 723.4,273.7 723.9,269.6 724.3,265.3 724.6,261.0 724.7,256.7 724.7,252.6 724.5,248.8 724.1,245.2 723.6,241.6 722.9,238.0 722.1,234.2 721.1,230.2 720.1,226.1 718.8,221.9 717.3,217.5 715.5,213.1 713.3,208.4 710.8,203.5 708.1,198.6 705.2,193.8 702.3,189.3 699.4,185.3 696.4,181.6 693.3,178.0 690.0,174.5 686.5,170.9 682.7,167.2 678.7,163.4 674.5,159.6 670.0,155.9 665.4,152.4 660.5,149.0 655.3,145.6 649.9,142.4 644.4,139.4 639.1,136.6 633.8,134.1 628.5,131.8 623.3,129.8 618.0,127.9 612.7,126.1 607.3,124.4 601.7,122.9 596.2,121.6 591.0,120.4 586.4,119.5 582.2,118.9 578.3,118.5 574.9,118.4 572.1,118.3 570.0,118.2" fill="none" stroke="#12e012" stroke-width="1.15" stroke-linejoin="round" /><line x1="928" y1="123.5" x2="1506" y2="123.5" stroke="#434343" stroke-dasharray="2 2"/><line x1="928" y1="467.5" x2="1506" y2="467.5" stroke="#434343" stroke-dasharray="2 2"/><line x1="928.5" y1="123" x2="928.5" y2="468" stroke="#434343" stroke-dasharray="2 2"/><line x1="1505.5" y1="123" x2="1505.5" y2="468" stroke="#434343" stroke-dasharray="2 2"/><line x1="986.5" y1="123" x2="986.5" y2="468" stroke="#434343" stroke-dasharray="2 2"/><line x1="1063.5" y1="123" x2="1063.5" y2="468" stroke="#434343" stroke-dasharray="2 2"/><line x1="1140.5" y1="123" x2="1140.5" y2="468" stroke="#434343" stroke-dasharray="2 2"/><line x1="1217.5" y1="123" x2="1217.5" y2="468" stroke="#434343" stroke-dasharray="2 2"/><line x1="1293.5" y1="123" x2="1293.5" y2="468" stroke="#434343" stroke-dasharray="2 2"/><line x1="1370.5" y1="123" x2="1370.5" y2="468" stroke="#434343" stroke-dasharray="2 2"/><line x1="1447.5" y1="123" x2="1447.5" y2="468" stroke="#434343" stroke-dasharray="2 2"/><line x1="928" y1="131.5" x2="1506" y2="131.5" stroke="#434343" stroke-dasharray="2 2"/><text x="922.2" y="136" font-size="11" fill="#fff" text-anchor="end" >0</text><line x1="928" y1="175.5" x2="1506" y2="175.5" stroke="#434343" stroke-dasharray="2 2"/><text x="922.2" y="180" font-size="11" fill="#fff" text-anchor="end" >-5</text><line x1="928" y1="218.5" x2="1506" y2="218.5" stroke="#434343" stroke-dasharray="2 2"/><text x="922.2" y="223" font-size="11" fill="#fff" text-anchor="end" >-10</text><line x1="928" y1="261.5" x2="1506" y2="261.5" stroke="#434343" stroke-dasharray="2 2"/><text x="922.2" y="266" font-size="11" fill="#fff" text-anchor="end" >-15</text><line x1="928" y1="305.5" x2="1506" y2="305.5" stroke="#434343" stroke-dasharray="2 2"/><text x="922.2" y="310" font-size="11" fill="#fff" text-anchor="end" >-20</text><line x1="928" y1="348.5" x2="1506" y2="348.5" stroke="#434343" stroke-dasharray="2 2"/><text x="922.2" y="353" font-size="11" fill="#fff" text-anchor="end" >-25</text><line x1="928" y1="391.5" x2="1506" y2="391.5" stroke="#434343" stroke-dasharray="2 2"/><text x="922.2" y="396" font-size="11" fill="#fff" text-anchor="end" >-30</text><line x1="928" y1="435.5" x2="1506" y2="435.5" stroke="#434343" stroke-dasharray="2 2"/><text x="922.2" y="440" font-size="11" fill="#fff" text-anchor="end" >-35</text><text x="985.8" y="483" font-size="11" fill="#fff" text-anchor="middle" >5,114M</text><text x="1062.8" y="483" font-size="11" fill="#fff" text-anchor="middle" >5,116M</text><text x="1139.8" y="483" font-size="11" fill="#fff" text-anchor="middle" >5,118M</text><text x="1216.8" y="483" font-size="11" fill="#fff" text-anchor="middle" >5,12M</text><text x="1292.8" y="483" font-size="11" fill="#fff" text-anchor="middle" >5,122M</text><text x="1369.8" y="483" font-size="11" fill="#fff" text-anchor="middle" >5,124M</text><text x="1446.8" y="483" font-size="11" fill="#fff" text-anchor="middle" >5,126M</text><text x="883" y="103" font-size="11" fill="#fff" font-weight="bold" letter-spacing="0.22" >Freq Log Mag dB S11</text><text x="1007" y="103" font-size="11" fill="#22e022" letter-spacing="-0.15" >S11 live</text><polyline points="928.5,140.7 935.1,140.6 944.1,140.6 954.9,140.5 966.6,140.4 978.5,140.3 990.0,140.2 1001.3,140.1 1013.1,140.0 1025.1,139.9 1037.1,139.8 1048.8,139.7 1060.0,139.6 1071.0,139.5 1082.2,139.3 1093.1,139.2 1103.3,139.0 1112.4,138.9 1120.0,138.8 1125.7,138.7 1129.9,138.6 1133.0,138.5 1135.5,138.5 1137.6,138.5 1140.0,138.5 1142.5,138.6 1144.7,138.7 1146.6,138.9 1148.3,139.1 1149.9,139.3 1151.4,139.6 1152.7,139.9 1153.7,140.2 1154.6,140.5 1155.4,140.9 1156.2,141.4 1157.0,142.0 1157.8,142.8 1158.6,143.7 1159.3,144.7 1160.0,145.9 1160.7,147.1 1161.3,148.4 1161.9,149.7 1162.3,151.1 1162.8,152.5 1163.2,154.1 1163.6,155.9 1164.0,158.0 1164.4,160.3 1164.7,162.8 1165.0,165.5 1165.4,168.5 1165.7,171.6 1166.0,175.0 1166.3,178.6 1166.7,182.5 1167.0,186.6 1167.3,190.9 1167.7,195.3 1168.0,200.0 1168.3,205.0 1168.7,210.5 1169.0,216.2 1169.3,221.8 1169.7,227.2 1170.0,232.0 1170.3,236.4 1170.6,240.4 1170.9,244.2 1171.2,247.8 1171.5,251.0 1171.8,254.0 1172.1,256.8 1172.3,259.6 1172.6,262.0 1172.9,264.1 1173.2,265.5 1173.5,266.2 1173.9,265.9 1174.3,264.6 1174.7,262.7 1175.1,260.6 1175.5,258.6 1176.0,257.0 1176.5,255.7 1177.0,254.3 1177.5,253.1 1178.0,252.1 1178.5,251.4 1179.0,251.2 1179.5,251.3 1180.0,251.7 1180.5,252.4 1181.0,253.5 1181.5,255.4 1182.0,258.0 1182.5,261.5 1183.0,265.9 1183.5,270.9 1184.0,276.4 1184.5,282.2 1185.0,288.0 1185.5,294.3 1186.0,301.4 1186.5,308.7 1187.1,315.8 1187.5,322.4 1188.0,328.0 1188.4,332.9 1188.8,337.6 1189.2,341.7 1189.5,344.9 1189.9,346.8 1190.3,347.2 1190.7,345.6 1191.2,342.3 1191.6,337.7 1192.1,332.4 1192.5,327.0 1193.0,322.0 1193.5,317.1 1194.0,311.9 1194.5,306.5 1195.0,301.2 1195.5,296.3 1196.0,292.0 1196.5,288.3 1197.0,284.9 1197.5,281.9 1198.0,279.2 1198.5,276.9 1199.0,275.0 1199.5,273.5 1200.0,272.5 1200.5,271.8 1201.0,271.4 1201.5,271.3 1202.0,271.3 1202.5,271.4 1203.0,271.8 1203.5,272.3 1204.0,273.1 1204.5,274.3 1205.0,276.0 1205.5,278.2 1206.0,280.9 1206.5,284.0 1207.0,287.4 1207.5,290.7 1208.0,294.0 1208.5,297.3 1209.0,300.8 1209.5,304.3 1210.0,307.8 1210.5,311.0 1211.0,314.0 1211.5,317.1 1211.9,320.4 1212.4,323.5 1212.8,326.0 1213.3,327.4 1213.8,327.3 1214.3,325.4 1214.8,322.0 1215.4,317.5 1215.9,312.4 1216.5,307.1 1217.0,302.0 1217.5,297.0 1218.0,291.7 1218.5,286.2 1218.9,280.6 1219.4,275.2 1220.0,270.0 1220.6,264.9 1221.3,259.8 1221.9,254.8 1222.6,250.0 1223.3,245.7 1224.0,242.0 1224.7,238.9 1225.3,236.3 1226.0,234.1 1226.6,232.3 1227.3,230.8 1228.0,229.5 1228.7,228.5 1229.4,227.7 1230.2,227.3 1230.9,227.1 1231.6,227.1 1232.3,227.3 1232.9,227.5 1233.6,227.8 1234.2,228.3 1234.8,229.0 1235.4,230.3 1236.0,232.0 1236.6,234.2 1237.3,236.9 1238.0,239.9 1238.7,243.4 1239.3,247.4 1240.0,252.0 1240.7,257.3 1241.4,263.3 1242.1,269.8 1242.7,276.5 1243.4,283.3 1244.0,290.0 1244.6,296.6 1245.1,303.3 1245.5,310.0 1246.0,316.8 1246.5,323.4 1247.0,330.0 1247.5,337.3 1248.1,345.6 1248.6,353.8 1249.2,360.9 1249.7,365.8 1250.2,367.6 1250.7,365.5 1251.2,360.4 1251.6,353.0 1252.1,344.5 1252.5,335.9 1253.0,328.0 1253.5,320.6 1253.9,312.7 1254.4,304.6 1254.9,296.6 1255.4,289.0 1256.0,282.0 1256.6,275.5 1257.3,269.2 1257.9,263.3 1258.6,257.9 1259.3,253.1 1260.0,249.0 1260.7,245.7 1261.4,243.1 1262.1,241.0 1262.7,239.6 1263.4,238.7 1264.1,238.4 1264.8,238.6 1265.4,239.3 1266.1,240.5 1266.8,242.4 1267.4,244.9 1268.0,248.0 1268.6,251.8 1269.1,256.3 1269.6,261.4 1270.0,267.0 1270.5,273.2 1271.0,280.0 1271.5,287.6 1272.0,296.0 1272.5,305.1 1273.1,314.3 1273.5,323.4 1274.0,332.0 1274.4,341.4 1274.8,352.0 1275.2,362.5 1275.5,371.4 1275.9,377.4 1276.3,378.9 1276.7,374.9 1277.2,366.2 1277.6,354.5 1278.1,341.5 1278.6,328.8 1279.0,318.0 1279.4,308.9 1279.8,300.1 1280.2,291.6 1280.6,283.4 1281.0,275.5 1281.5,268.0 1282.0,260.6 1282.5,253.2 1283.1,246.1 1283.6,239.6 1284.2,234.0 1284.7,229.4 1285.2,226.2 1285.7,224.3 1286.1,223.2 1286.6,222.5 1287.0,221.9 1287.5,221.0 1288.0,219.9 1288.5,218.9 1289.0,217.9 1289.4,217.0 1289.9,215.9 1290.3,214.5 1290.7,212.9 1291.0,211.2 1291.3,209.4 1291.7,207.4 1292.0,205.2 1292.3,203.0 1292.6,200.5 1293.0,197.9 1293.3,195.1 1293.6,192.2 1294.0,189.4 1294.3,186.8 1294.6,184.3 1295.0,181.8 1295.3,179.3 1295.6,177.0 1296.0,174.7 1296.4,172.6 1296.8,170.6 1297.3,168.8 1297.8,167.0 1298.3,165.4 1298.8,163.9 1299.4,162.5 1300.0,161.2 1300.6,160.1 1301.2,159.1 1301.9,158.2 1302.6,157.3 1303.5,156.4 1304.5,155.5 1305.5,154.5 1306.7,153.6 1307.9,152.8 1309.2,152.0 1310.6,151.3 1312.1,150.7 1313.6,150.2 1315.1,149.8 1316.8,149.5 1318.7,149.1 1320.7,148.8 1322.9,148.5 1325.4,148.2 1328.0,147.9 1330.6,147.7 1333.3,147.4 1335.9,147.2 1338.4,147.0 1340.8,146.8 1343.3,146.6 1345.8,146.5 1348.4,146.3 1351.1,146.2 1353.7,146.1 1356.0,146.0 1358.4,146.0 1361.3,145.9 1365.0,145.8 1370.0,145.7 1376.6,145.5 1384.7,145.4 1393.7,145.2 1402.9,145.0 1411.9,144.8 1420.0,144.6 1427.2,144.4 1433.9,144.3 1440.3,144.2 1446.7,144.0 1453.2,143.9 1460.0,143.8 1467.7,143.7 1476.3,143.6 1485.0,143.5 1493.1,143.3 1500.0,143.3 1505.0,143.2" fill="none" stroke="#12e012" stroke-width="1.15" stroke-linejoin="round" /><line x1="281" y1="533.5" x2="859" y2="533.5" stroke="#434343" stroke-dasharray="2 2"/><line x1="281" y1="877.5" x2="859" y2="877.5" stroke="#434343" stroke-dasharray="2 2"/><line x1="281.5" y1="533" x2="281.5" y2="878" stroke="#434343" stroke-dasharray="2 2"/><line x1="858.5" y1="533" x2="858.5" y2="878" stroke="#434343" stroke-dasharray="2 2"/><line x1="339.5" y1="533" x2="339.5" y2="878" stroke="#434343" stroke-dasharray="2 2"/><line x1="416.5" y1="533" x2="416.5" y2="878" stroke="#434343" stroke-dasharray="2 2"/><line x1="493.5" y1="533" x2="493.5" y2="878" stroke="#434343" stroke-dasharray="2 2"/><line x1="570.5" y1="533" x2="570.5" y2="878" stroke="#434343" stroke-dasharray="2 2"/><line x1="646.5" y1="533" x2="646.5" y2="878" stroke="#434343" stroke-dasharray="2 2"/><line x1="723.5" y1="533" x2="723.5" y2="878" stroke="#434343" stroke-dasharray="2 2"/><line x1="800.5" y1="533" x2="800.5" y2="878" stroke="#434343" stroke-dasharray="2 2"/><line x1="281" y1="543.5" x2="859" y2="543.5" stroke="#434343" stroke-dasharray="2 2"/><text x="275.3" y="548" font-size="11" fill="#fff" text-anchor="end" >0</text><line x1="281" y1="573.5" x2="859" y2="573.5" stroke="#434343" stroke-dasharray="2 2"/><text x="275.3" y="578" font-size="11" fill="#fff" text-anchor="end" >-10</text><line x1="281" y1="603.5" x2="859" y2="603.5" stroke="#434343" stroke-dasharray="2 2"/><text x="275.3" y="608" font-size="11" fill="#fff" text-anchor="end" >-20</text><line x1="281" y1="633.5" x2="859" y2="633.5" stroke="#434343" stroke-dasharray="2 2"/><text x="275.3" y="638" font-size="11" fill="#fff" text-anchor="end" >-30</text><line x1="281" y1="663.5" x2="859" y2="663.5" stroke="#434343" stroke-dasharray="2 2"/><text x="275.3" y="668" font-size="11" fill="#fff" text-anchor="end" >-40</text><line x1="281" y1="693.5" x2="859" y2="693.5" stroke="#434343" stroke-dasharray="2 2"/><text x="275.3" y="698" font-size="11" fill="#fff" text-anchor="end" >-50</text><line x1="281" y1="723.5" x2="859" y2="723.5" stroke="#434343" stroke-dasharray="2 2"/><text x="275.3" y="728" font-size="11" fill="#fff" text-anchor="end" >-60</text><line x1="281" y1="753.5" x2="859" y2="753.5" stroke="#434343" stroke-dasharray="2 2"/><text x="275.3" y="758" font-size="11" fill="#fff" text-anchor="end" >-70</text><line x1="281" y1="783.5" x2="859" y2="783.5" stroke="#434343" stroke-dasharray="2 2"/><text x="275.3" y="788" font-size="11" fill="#fff" text-anchor="end" >-80</text><line x1="281" y1="813.5" x2="859" y2="813.5" stroke="#434343" stroke-dasharray="2 2"/><text x="275.3" y="818" font-size="11" fill="#fff" text-anchor="end" >-90</text><line x1="281" y1="843.5" x2="859" y2="843.5" stroke="#434343" stroke-dasharray="2 2"/><text x="275.3" y="848" font-size="11" fill="#fff" text-anchor="end" >-100</text><line x1="281" y1="873.5" x2="859" y2="873.5" stroke="#434343" stroke-dasharray="2 2"/><text x="275.3" y="878" font-size="11" fill="#fff" text-anchor="end" >-110</text><text x="338.8" y="893" font-size="11" fill="#fff" text-anchor="middle" >5,114M</text><text x="415.8" y="893" font-size="11" fill="#fff" text-anchor="middle" >5,116M</text><text x="492.8" y="893" font-size="11" fill="#fff" text-anchor="middle" >5,118M</text><text x="569.8" y="893" font-size="11" fill="#fff" text-anchor="middle" >5,12M</text><text x="645.8" y="893" font-size="11" fill="#fff" text-anchor="middle" >5,122M</text><text x="722.8" y="893" font-size="11" fill="#fff" text-anchor="middle" >5,124M</text><text x="799.8" y="893" font-size="11" fill="#fff" text-anchor="middle" >5,126M</text><text x="236" y="513" font-size="11" fill="#fff" font-weight="bold" letter-spacing="0.35" >Freq Log Mag dB S21</text><text x="360" y="513" font-size="11" fill="#9a9ae6" letter-spacing="-0.15" >S21 live</text><polyline points="281.5,750.6 283.0,750.2 284.5,751.2 286.0,749.9 287.5,750.9 289.0,750.5 290.5,749.8 292.0,750.7 293.5,749.6 295.0,750.5 296.5,749.6 298.0,749.6 299.5,750.3 301.0,751.2 302.5,749.6 304.0,749.8 305.5,750.7 307.0,751.4 308.5,750.5 310.0,750.1 311.5,751.4 313.0,749.3 314.5,751.1 316.0,749.8 317.5,749.5 319.0,749.4 320.5,749.8 322.0,750.9 323.5,749.4 325.0,750.3 326.5,750.4 328.0,749.8 329.5,750.2 331.0,749.1 332.5,749.0 334.0,749.3 335.5,750.3 337.0,749.7 338.5,749.4 340.0,749.9 341.5,749.6 343.0,749.1 344.5,750.1 346.0,749.8 347.5,748.7 349.0,749.3 350.5,749.0 352.0,749.6 353.5,749.2 355.0,748.0 356.5,749.4 358.0,747.3 359.5,747.8 361.0,748.4 362.5,746.9 364.0,747.4 365.5,746.2 367.0,747.3 368.5,747.2 370.0,746.5 371.5,746.8 373.0,745.2 374.5,745.7 376.0,745.1 377.5,744.7 379.0,744.0 380.5,744.5 382.0,744.3 383.5,742.9 385.0,742.9 386.5,741.1 388.0,742.1 389.5,741.5 391.0,741.8 392.5,740.9 394.0,739.2 395.5,738.9 397.0,738.9 398.5,737.0 400.0,737.3 401.5,736.0 403.0,735.3 404.5,734.5 406.0,735.4 407.5,733.3 409.0,732.9 410.5,732.5 412.0,733.0 413.5,730.6 415.0,730.8 416.5,730.4 418.0,730.4 419.5,729.4 421.0,728.7 422.5,726.5 424.0,725.8 425.5,724.7 427.0,724.5 428.5,723.6 430.0,721.6 431.5,720.5 433.0,719.5 434.5,718.4 436.0,717.5 437.5,716.5 439.0,714.9 440.5,713.3 442.0,712.5 443.5,711.1 445.0,709.9 446.5,709.0 448.0,707.2 449.5,705.5 451.0,704.1 452.5,702.7 454.0,700.4 455.5,699.8 457.0,698.1 458.5,696.5 460.0,694.8 461.5,692.6 463.0,690.9 464.5,689.3 466.0,687.6 467.5,685.8 469.0,683.9 470.5,682.0 472.0,680.0 473.5,677.8 475.0,675.5 476.5,673.1 478.0,670.7 479.5,668.1 481.0,665.6 482.5,663.1 484.0,660.5 485.5,657.9 487.0,655.3 488.5,652.6 490.0,649.9 491.5,647.1 493.0,644.2 494.5,641.3 496.0,638.3 497.5,635.2 499.0,631.9 500.5,628.5 502.0,624.8 503.5,621.0 505.0,617.0 506.5,613.1 508.0,609.2 509.5,605.0 511.0,600.2 512.5,594.3 514.0,587.3 515.5,579.9 517.0,572.8 518.5,559.2 520.0,557.5 521.5,556.4 523.0,555.7 524.5,555.2 526.0,554.7 527.5,554.2 529.0,554.0 530.5,553.7 532.0,553.4 533.5,553.1 535.0,552.9 536.5,552.7 538.0,552.6 539.5,552.4 541.0,552.2 542.5,552.0 544.0,551.9 545.5,551.8 547.0,551.6 548.5,551.5 550.0,551.4 551.5,551.2 553.0,551.1 554.5,551.0 556.0,550.9 557.5,550.8 559.0,550.6 560.5,550.5 562.0,550.3 563.5,550.2 565.0,550.0 566.5,549.8 568.0,549.7 569.5,549.7 571.0,549.9 572.5,550.0 574.0,550.2 575.5,550.4 577.0,550.6 578.5,550.8 580.0,551.0 581.5,551.2 583.0,551.5 584.5,551.7 586.0,551.8 587.5,551.8 589.0,551.7 590.5,551.6 592.0,551.4 593.5,551.3 595.0,551.1 596.5,550.9 598.0,550.7 599.5,550.6 601.0,550.5 602.5,550.4 604.0,550.4 605.5,550.4 607.0,550.5 608.5,550.6 610.0,550.7 611.5,550.9 613.0,551.0 614.5,551.2 616.0,551.3 617.5,551.4 619.0,551.5 620.5,551.7 622.0,551.8 623.5,551.9 625.0,552.1 626.5,552.3 628.0,552.4 629.5,552.7 631.0,553.0 632.5,553.3 634.0,553.8 635.5,554.4 637.0,555.0 638.5,555.6 640.0,556.3 641.5,557.6 643.0,559.1 644.5,561.0 646.0,563.8 647.5,567.5 649.0,571.8 650.5,576.3 652.0,580.7 653.5,585.7 655.0,591.3 656.5,597.6 658.0,604.3 659.5,610.9 661.0,617.5 662.5,623.8 664.0,630.2 665.5,636.0 667.0,641.0 668.5,645.3 670.0,649.2 671.5,652.9 673.0,656.5 674.5,660.1 676.0,663.8 677.5,667.5 679.0,671.1 680.5,674.6 682.0,677.9 683.5,681.0 685.0,683.8 686.5,686.4 688.0,688.9 689.5,691.4 691.0,694.1 692.5,696.7 694.0,698.6 695.5,701.2 697.0,703.5 698.5,705.9 700.0,708.3 701.5,710.2 703.0,712.4 704.5,714.4 706.0,717.0 707.5,718.6 709.0,720.7 710.5,722.5 712.0,723.4 713.5,725.4 715.0,727.7 716.5,728.9 718.0,728.6 719.5,729.7 721.0,731.5 722.5,731.7 724.0,733.1 725.5,733.8 727.0,736.2 728.5,737.4 730.0,738.5 731.5,737.7 733.0,739.6 734.5,740.0 736.0,739.3 737.5,741.3 739.0,741.8 740.5,740.4 742.0,742.2 743.5,741.2 745.0,741.6 746.5,742.9 748.0,742.7 749.5,741.5 751.0,742.2 752.5,742.6 754.0,742.4 755.5,742.2 757.0,742.6 758.5,743.7 760.0,742.3 761.5,743.6 763.0,743.5 764.5,742.8 766.0,743.6 767.5,744.4 769.0,744.4 770.5,743.6 772.0,745.7 773.5,745.5 775.0,746.0 776.5,744.3 778.0,744.8 779.5,744.4 781.0,746.2 782.5,745.2 784.0,745.0 785.5,745.8 787.0,746.9 788.5,746.8 790.0,745.7 791.5,745.5 793.0,747.3 794.5,746.6 796.0,747.0 797.5,745.7 799.0,745.7 800.5,747.2 802.0,746.7 803.5,746.0 805.0,747.9 806.5,747.3 808.0,747.7 809.5,746.2 811.0,748.0 812.5,746.3 814.0,748.1 815.5,747.2 817.0,747.0 818.5,747.6 820.0,748.4 821.5,747.0 823.0,746.8 824.5,747.7 826.0,747.1 827.5,746.9 829.0,747.0 830.5,746.8 832.0,747.2 833.5,747.4 835.0,747.5 836.5,748.5 838.0,747.5 839.5,748.0 841.0,747.3 842.5,747.7 844.0,747.0 845.5,747.6 847.0,747.1 848.5,748.7 850.0,748.3 851.5,747.5 853.0,748.2 854.5,749.2 856.0,747.4 857.5,749.0" fill="none" stroke="#8a8ad6" stroke-width="1.05" stroke-linejoin="round" /><path d="M284.5 523 L289 531.5 L280 531.5Z" fill="#fff"/><path d="M568.3 547.6 L571.4 543.6 L565.2 543.6Z" fill="#11151e" stroke="#fff" stroke-width="1.2"/><rect x="491" y="535" width="42" height="13" fill="#11151e"/><text x="492.5" y="545" font-size="11" fill="#fff" letter-spacing="-0.15" >S21 max</text><rect x="491" y="548" width="72" height="13" fill="#11151e"/><text x="492.5" y="558" font-size="11" fill="#fff" letter-spacing="-0.15" >5,119963 MHz</text><rect x="491" y="561" width="62" height="13" fill="#11151e"/><text x="492.5" y="571" font-size="11" fill="#fff" letter-spacing="-0.15" >-2,18707 dB</text><line x1="928" y1="533.5" x2="1506" y2="533.5" stroke="#434343" stroke-dasharray="2 2"/><line x1="928" y1="877.5" x2="1506" y2="877.5" stroke="#434343" stroke-dasharray="2 2"/><line x1="928.5" y1="533" x2="928.5" y2="878" stroke="#434343" stroke-dasharray="2 2"/><line x1="1505.5" y1="533" x2="1505.5" y2="878" stroke="#434343" stroke-dasharray="2 2"/><line x1="986.5" y1="533" x2="986.5" y2="878" stroke="#434343" stroke-dasharray="2 2"/><line x1="1063.5" y1="533" x2="1063.5" y2="878" stroke="#434343" stroke-dasharray="2 2"/><line x1="1140.5" y1="533" x2="1140.5" y2="878" stroke="#434343" stroke-dasharray="2 2"/><line x1="1217.5" y1="533" x2="1217.5" y2="878" stroke="#434343" stroke-dasharray="2 2"/><line x1="1293.5" y1="533" x2="1293.5" y2="878" stroke="#434343" stroke-dasharray="2 2"/><line x1="1370.5" y1="533" x2="1370.5" y2="878" stroke="#434343" stroke-dasharray="2 2"/><line x1="1447.5" y1="533" x2="1447.5" y2="878" stroke="#434343" stroke-dasharray="2 2"/><line x1="928" y1="542.5" x2="1506" y2="542.5" stroke="#434343" stroke-dasharray="2 2"/><text x="923" y="547" font-size="11" fill="#fff" text-anchor="end" >9</text><line x1="928" y1="557.5" x2="1506" y2="557.5" stroke="#434343" stroke-dasharray="2 2"/><text x="923" y="562" font-size="11" fill="#fff" text-anchor="end" >8</text><line x1="928" y1="573.5" x2="1506" y2="573.5" stroke="#434343" stroke-dasharray="2 2"/><text x="923" y="578" font-size="11" fill="#fff" text-anchor="end" >7</text><line x1="928" y1="592.5" x2="1506" y2="592.5" stroke="#434343" stroke-dasharray="2 2"/><text x="923" y="597" font-size="11" fill="#fff" text-anchor="end" >6</text><line x1="928" y1="613.5" x2="1506" y2="613.5" stroke="#434343" stroke-dasharray="2 2"/><text x="923" y="618" font-size="11" fill="#fff" text-anchor="end" >5</text><line x1="928" y1="637.5" x2="1506" y2="637.5" stroke="#434343" stroke-dasharray="2 2"/><text x="923" y="642" font-size="11" fill="#fff" text-anchor="end" >4</text><line x1="928" y1="668.5" x2="1506" y2="668.5" stroke="#434343" stroke-dasharray="2 2"/><text x="923" y="673" font-size="11" fill="#fff" text-anchor="end" >3</text><line x1="928" y1="718.5" x2="1506" y2="718.5" stroke="#434343" stroke-dasharray="2 2"/><text x="923" y="723" font-size="11" fill="#fff" text-anchor="end" >1,9</text><line x1="928" y1="731.5" x2="1506" y2="731.5" stroke="#434343" stroke-dasharray="2 2"/><text x="923" y="736" font-size="11" fill="#fff" text-anchor="end" >1,7</text><line x1="928" y1="747.5" x2="1506" y2="747.5" stroke="#434343" stroke-dasharray="2 2"/><text x="923" y="752" font-size="11" fill="#fff" text-anchor="end" >1,5</text><line x1="928" y1="768.5" x2="1506" y2="768.5" stroke="#434343" stroke-dasharray="2 2"/><text x="923" y="773" font-size="11" fill="#fff" text-anchor="end" >1,3</text><line x1="928" y1="782.5" x2="1506" y2="782.5" stroke="#434343" stroke-dasharray="2 2"/><text x="923" y="787" font-size="11" fill="#fff" text-anchor="end" >1,2</text><line x1="928" y1="805.5" x2="1506" y2="805.5" stroke="#434343" stroke-dasharray="2 2"/><text x="923" y="810" font-size="11" fill="#fff" text-anchor="end" >1,09</text><line x1="928" y1="818.5" x2="1506" y2="818.5" stroke="#434343" stroke-dasharray="2 2"/><text x="923" y="823" font-size="11" fill="#fff" text-anchor="end" >1,05</text><line x1="928" y1="834.5" x2="1506" y2="834.5" stroke="#434343" stroke-dasharray="2 2"/><text x="923" y="839" font-size="11" fill="#fff" text-anchor="end" >1,02</text><line x1="928" y1="850.5" x2="1506" y2="850.5" stroke="#434343" stroke-dasharray="2 2"/><text x="923" y="855" font-size="11" fill="#fff" text-anchor="end" >1,005</text><line x1="928" y1="863.5" x2="1506" y2="863.5" stroke="#434343" stroke-dasharray="2 2"/><text x="923" y="868" font-size="11" fill="#fff" text-anchor="end" >1,0007</text><text x="923" y="882" font-size="11" fill="#fff" text-anchor="end" >1</text><line x1="928" y1="713.5" x2="1506" y2="713.5" stroke="#4a3d38" stroke-dasharray="1 2"/><text x="985.8" y="893" font-size="11" fill="#fff" text-anchor="middle" >5,114M</text><text x="1062.8" y="893" font-size="11" fill="#fff" text-anchor="middle" >5,116M</text><text x="1139.8" y="893" font-size="11" fill="#fff" text-anchor="middle" >5,118M</text><text x="1216.8" y="893" font-size="11" fill="#fff" text-anchor="middle" >5,12M</text><text x="1292.8" y="893" font-size="11" fill="#fff" text-anchor="middle" >5,122M</text><text x="1369.8" y="893" font-size="11" fill="#fff" text-anchor="middle" >5,124M</text><text x="1446.8" y="893" font-size="11" fill="#fff" text-anchor="middle" >5,126M</text><text x="883" y="513" font-size="11" fill="#fff" font-weight="bold" letter-spacing="0.24" >Freq VSWR S11</text><text x="976.5" y="513" font-size="11" fill="#22e022" letter-spacing="-0.15" >S11 live</text><clipPath id="cv"><rect x="928" y="533" width="578" height="345"/></clipPath><g clip-path="url(#cv)"><polyline points="928.5,468.3 935.1,467.6 944.1,466.6 954.9,465.5 966.6,464.2 978.5,462.8 990.0,461.5 1001.3,460.3 1013.1,458.9 1025.1,457.6 1037.1,456.1 1048.8,454.6 1060.0,452.9 1071.0,451.0 1082.2,448.8 1093.1,446.5 1103.3,444.2 1112.4,442.1 1120.0,440.4 1125.7,438.8 1129.9,437.2 1133.0,435.9 1135.5,435.0 1137.6,434.7 1140.0,435.3 1142.5,436.8 1144.7,439.0 1146.6,441.7 1148.3,445.0 1149.9,448.8 1151.4,452.9 1152.7,457.0 1153.7,460.9 1154.6,465.2 1155.4,470.3 1156.2,476.5 1157.0,484.2 1157.8,493.0 1158.6,502.4 1159.3,512.1 1160.0,522.0 1160.7,532.2 1161.3,542.8 1161.9,552.6 1162.3,561.6 1162.8,570.1 1163.2,578.9 1163.6,588.4 1164.0,597.8 1164.4,607.0 1164.7,616.0 1165.0,624.9 1165.4,633.6 1165.7,642.0 1166.0,650.2 1166.3,658.2 1166.7,666.0 1167.0,673.8 1167.3,681.4 1167.7,688.7 1168.0,695.6 1168.3,702.4 1168.7,709.2 1169.0,715.3 1169.3,720.5 1169.7,725.5 1170.0,729.9 1170.3,733.7 1170.6,737.2 1170.9,740.3 1171.2,743.2 1171.5,745.9 1171.8,748.1 1172.1,750.1 1172.3,751.9 1172.6,753.6 1172.9,755.0 1173.2,755.9 1173.5,756.4 1173.9,756.1 1174.3,755.3 1174.7,754.0 1175.1,752.6 1175.5,751.3 1176.0,750.2 1176.5,749.3 1177.0,748.4 1177.5,747.5 1178.0,746.7 1178.5,746.2 1179.0,746.0 1179.5,746.1 1180.0,746.4 1180.5,747.0 1181.0,747.8 1181.5,749.1 1182.0,750.9 1182.5,753.3 1183.0,756.2 1183.5,759.5 1184.0,763.0 1184.5,766.7 1185.0,770.1 1185.5,773.4 1186.0,777.0 1186.5,780.7 1187.1,784.0 1187.5,786.8 1188.0,789.1 1188.4,791.1 1188.8,793.0 1189.2,794.7 1189.5,796.0 1189.9,796.8 1190.3,796.9 1190.7,796.3 1191.2,794.9 1191.6,793.1 1192.1,790.9 1192.5,788.7 1193.0,786.6 1193.5,784.6 1194.0,782.3 1194.5,779.6 1195.0,776.9 1195.5,774.4 1196.0,772.2 1196.5,770.2 1197.0,768.4 1197.5,766.5 1198.0,764.8 1198.5,763.3 1199.0,762.1 1199.5,761.2 1200.0,760.5 1200.5,760.0 1201.0,759.8 1201.5,759.7 1202.0,759.7 1202.5,759.8 1203.0,760.0 1203.5,760.4 1204.0,760.9 1204.5,761.7 1205.0,762.8 1205.5,764.2 1206.0,765.9 1206.5,767.9 1207.0,769.8 1207.5,771.5 1208.0,773.2 1208.5,774.9 1209.0,776.7 1209.5,778.5 1210.0,780.3 1210.5,781.9 1211.0,783.3 1211.5,784.5 1211.9,785.9 1212.4,787.2 1212.8,788.3 1213.3,788.8 1213.8,788.8 1214.3,788.0 1214.8,786.6 1215.4,784.7 1215.9,782.6 1216.5,779.9 1217.0,777.3 1217.5,774.8 1218.0,772.0 1218.5,769.1 1218.9,765.7 1219.4,762.2 1220.0,758.9 1220.6,755.5 1221.3,752.1 1221.9,748.7 1222.6,745.1 1223.3,741.6 1224.0,738.5 1224.7,735.9 1225.3,733.7 1226.0,731.8 1226.6,730.2 1227.3,728.8 1228.0,727.7 1228.7,726.7 1229.4,726.1 1230.2,725.7 1230.9,725.5 1231.6,725.5 1232.3,725.7 1232.9,725.8 1233.6,726.1 1234.2,726.5 1234.8,727.2 1235.4,728.3 1236.0,729.9 1236.6,731.9 1237.3,734.1 1238.0,736.7 1238.7,739.7 1239.3,743.0 1240.0,746.7 1240.7,750.4 1241.4,754.4 1242.1,758.7 1242.7,763.1 1243.4,767.5 1244.0,771.1 1244.6,774.5 1245.1,778.0 1245.5,781.4 1246.0,784.4 1246.5,787.2 1247.0,789.9 1247.5,792.9 1248.1,796.3 1248.6,799.6 1249.2,802.5 1249.7,804.4 1250.2,805.1 1250.7,804.3 1251.2,802.2 1251.6,799.3 1252.1,795.9 1252.5,792.3 1253.0,789.1 1253.5,786.0 1253.9,782.7 1254.4,778.7 1254.9,774.6 1255.4,770.6 1256.0,766.6 1256.6,762.4 1257.3,758.3 1257.9,754.4 1258.6,750.8 1259.3,747.5 1260.0,744.2 1260.7,741.5 1261.4,739.4 1262.1,737.7 1262.7,736.5 1263.4,735.7 1264.1,735.4 1264.8,735.6 1265.4,736.2 1266.1,737.3 1266.8,738.8 1267.4,740.9 1268.0,743.4 1268.6,746.5 1269.1,749.7 1269.6,753.1 1270.0,756.9 1270.5,761.0 1271.0,765.3 1271.5,769.9 1272.0,774.3 1272.5,778.9 1273.1,783.4 1273.5,787.2 1274.0,790.7 1274.4,794.6 1274.8,798.9 1275.2,803.1 1275.5,806.4 1275.9,808.2 1276.3,808.7 1276.7,807.5 1277.2,804.6 1277.6,799.9 1278.1,794.6 1278.6,789.4 1279.0,784.9 1279.4,780.8 1279.8,776.4 1280.2,772.0 1280.6,767.5 1281.0,762.5 1281.5,757.5 1282.0,752.6 1282.5,747.6 1283.1,741.9 1283.6,736.5 1284.2,731.6 1284.7,727.6 1285.2,724.7 1285.7,722.9 1286.1,721.8 1286.6,721.2 1287.0,720.7 1287.5,719.8 1288.0,718.7 1288.5,717.8 1289.0,716.9 1289.4,716.0 1289.9,715.0 1290.3,713.7 1290.7,712.0 1291.0,710.0 1291.3,707.8 1291.7,705.4 1292.0,702.7 1292.3,699.7 1292.6,696.4 1293.0,692.5 1293.3,688.3 1293.6,683.7 1294.0,679.0 1294.3,674.2 1294.6,669.5 1295.0,664.6 1295.3,659.7 1295.6,654.6 1296.0,649.5 1296.4,644.5 1296.8,639.5 1297.3,634.5 1297.8,629.4 1298.3,624.5 1298.8,619.7 1299.4,614.9 1300.0,610.5 1300.6,606.3 1301.2,602.4 1301.9,598.7 1302.6,594.9 1303.5,590.7 1304.5,586.0 1305.5,581.1 1306.7,576.1 1307.9,571.4 1309.2,566.9 1310.6,562.9 1312.1,559.4 1313.6,556.2 1315.1,553.4 1316.8,550.8 1318.7,548.3 1320.7,545.8 1322.9,543.3 1325.4,541.0 1328.0,538.8 1330.6,536.8 1333.3,534.9 1335.9,533.0 1338.4,531.2 1340.8,529.6 1343.3,528.1 1345.8,526.8 1348.4,525.7 1351.1,524.6 1353.7,523.8 1356.0,523.1 1358.4,522.6 1361.3,522.1 1365.0,521.4 1370.0,520.5 1376.6,519.2 1384.7,517.6 1393.7,515.9 1402.9,514.1 1411.9,512.4 1420.0,510.8 1427.2,509.4 1433.9,508.0 1440.3,506.8 1446.7,505.5 1453.2,504.4 1460.0,503.2 1467.7,502.0 1476.3,500.9 1485.0,499.7 1493.1,498.7 1500.0,497.8 1505.0,497.2" fill="none" stroke="#12e012" stroke-width="1.15" stroke-linejoin="round" /></g><path d="M1276.5 811.4 L1279.5 815.3 L1273.5 815.3Z" fill="#11151e" stroke="#fff" stroke-width="1.2"/><rect x="1281" y="813" width="40" height="13" fill="#11151e"/><text x="1282.5" y="823" font-size="11" fill="#fff" letter-spacing="-0.15" >S11 min</text><rect x="1281" y="826" width="70" height="13" fill="#11151e"/><text x="1282.5" y="836" font-size="11" fill="#fff" letter-spacing="-0.15" >5,121538 MHz</text><rect x="1281" y="839" width="46" height="13" fill="#11151e"/><text x="1282.5" y="849" font-size="11" fill="#fff" letter-spacing="-0.15" >1,07659</text></svg>
<div class="r" style="left:1527px;top:88px;width:230px;height:825px;background:#f0f0f0;"></div>
<div class="r" style="left:1527px;top:88px;width:230px;height:1px;background:#a0a0a0;"></div>
<div class="r" style="left:1527px;top:88px;width:1px;height:825px;background:#a0a0a0;"></div>
<div class="r" style="left:1528px;top:89px;width:228px;height:1px;background:#fbfbfb;"></div>
<div class="r" style="left:1528px;top:89px;width:1px;height:823px;background:#fbfbfb;"></div>
<div class="r" style="left:1756px;top:89px;width:1px;height:824px;background:#fff;"></div>
<div class="r" style="left:1527px;top:912px;width:230px;height:1px;background:#fff;"></div>
<div class="t" style="left:1444px;width:400px;text-align:center;top:88px;font-size:12px;letter-spacing:0.25px;">Mouse, live</div>
<div class="r" style="left:1628px;top:107px;width:128px;height:18px;background:#0078d7;"></div>
<div class="t" style="right:141px;top:107px;font-size:12px;letter-spacing:0.35px;margin-right:-0.35px;">Frequency</div>
<div class="t" style="left:1635px;top:107px;font-size:12px;letter-spacing:0.35px;color:#fff;overflow:hidden;width:121px;">5.120 039 MHz</div>
<div class="t" style="right:141px;top:125px;font-size:12px;letter-spacing:0.35px;margin-right:-0.35px;">Wavelength</div>
<div class="t" style="left:1635px;top:125px;font-size:12px;letter-spacing:0.35px;overflow:hidden;width:121px;">58.5528m</div>
<div class="t" style="right:141px;top:143px;font-size:12px;letter-spacing:0.35px;margin-right:-0.35px;">1/4 Wavelength</div>
<div class="t" style="left:1635px;top:143px;font-size:12px;letter-spacing:0.35px;overflow:hidden;width:121px;">14.6382m</div>
<div class="t" style="left:1532px;top:179px;font-size:12px;letter-spacing:0.35px;">S11 info</div>
<div class="t" style="right:141px;top:197px;font-size:12px;letter-spacing:0.35px;margin-right:-0.35px;">Real Imag</div>
<div class="t" style="left:1635px;top:197px;font-size:12px;letter-spacing:0.35px;overflow:hidden;width:121px;">-78.889m + j97.942m</div>
<div class="t" style="right:141px;top:215px;font-size:12px;letter-spacing:0.35px;margin-right:-0.35px;">Polar</div>
<div class="t" style="left:1635px;top:215px;font-size:12px;letter-spacing:0.35px;overflow:hidden;width:121px;">125.76m +128.85°</div>
<div class="t" style="right:141px;top:233px;font-size:12px;letter-spacing:0.35px;margin-right:-0.35px;">VSWR</div>
<div class="t" style="left:1635px;top:233px;font-size:12px;letter-spacing:0.35px;overflow:hidden;width:121px;">1.288</div>
<div class="t" style="right:141px;top:251px;font-size:12px;letter-spacing:0.35px;margin-right:-0.35px;">Return Loss</div>
<div class="t" style="left:1635px;top:251px;font-size:12px;letter-spacing:0.35px;overflow:hidden;width:121px;">-18.009dB</div>
<div class="t" style="right:141px;top:269px;font-size:12px;letter-spacing:0.35px;margin-right:-0.35px;">Quality Factor</div>
<div class="t" style="left:1635px;top:269px;font-size:12px;letter-spacing:0.35px;overflow:hidden;width:121px;">0.199</div>
<div class="t" style="right:141px;top:287px;font-size:12px;letter-spacing:0.35px;margin-right:-0.35px;">Group Delay</div>
<div class="t" style="left:1635px;top:287px;font-size:12px;letter-spacing:0.35px;overflow:hidden;width:121px;">-197.74us</div>
<div class="t" style="right:141px;top:305px;font-size:12px;letter-spacing:0.35px;margin-right:-0.35px;">Impedance</div>
<div class="t" style="left:1635px;top:305px;font-size:12px;letter-spacing:0.35px;overflow:hidden;width:121px;">41.93 + j8.345</div>
<div class="t" style="right:141px;top:323px;font-size:12px;letter-spacing:0.35px;margin-right:-0.35px;">|Z|</div>
<div class="t" style="left:1635px;top:323px;font-size:12px;letter-spacing:0.35px;overflow:hidden;width:121px;">42.7528</div>
<div class="t" style="right:141px;top:341px;font-size:12px;letter-spacing:0.35px;margin-right:-0.35px;">Series R</div>
<div class="t" style="left:1635px;top:341px;font-size:12px;letter-spacing:0.35px;overflow:hidden;width:121px;">41.9304</div>
<div class="t" style="right:141px;top:359px;font-size:12px;letter-spacing:0.35px;margin-right:-0.35px;">Series X</div>
<div class="t" style="left:1635px;top:359px;font-size:12px;letter-spacing:0.35px;overflow:hidden;width:121px;">8.34548</div>
<div class="t" style="right:141px;top:377px;font-size:12px;letter-spacing:0.35px;margin-right:-0.35px;">Series L</div>
<div class="t" style="left:1635px;top:377px;font-size:12px;letter-spacing:0.35px;overflow:hidden;width:121px;">259.42nH</div>
<div class="t" style="right:141px;top:395px;font-size:12px;letter-spacing:0.35px;margin-right:-0.35px;">Series C</div>
<div class="t" style="left:1635px;top:395px;font-size:12px;letter-spacing:0.35px;overflow:hidden;width:121px;">-3.7247nF</div>
<div class="t" style="right:141px;top:413px;font-size:12px;letter-spacing:0.35px;margin-right:-0.35px;">Parallel R</div>
<div class="t" style="left:1635px;top:413px;font-size:12px;letter-spacing:0.35px;overflow:hidden;width:121px;">43.5914</div>
<div class="t" style="right:141px;top:431px;font-size:12px;letter-spacing:0.35px;margin-right:-0.35px;">Parallel X</div>
<div class="t" style="left:1635px;top:431px;font-size:12px;letter-spacing:0.35px;overflow:hidden;width:121px;">219.017</div>
<div class="t" style="right:141px;top:449px;font-size:12px;letter-spacing:0.35px;margin-right:-0.35px;">Parallel L</div>
<div class="t" style="left:1635px;top:449px;font-size:12px;letter-spacing:0.35px;overflow:hidden;width:121px;">6.8081uH</div>
<div class="t" style="right:141px;top:467px;font-size:12px;letter-spacing:0.35px;margin-right:-0.35px;">Parallel C</div>
<div class="t" style="left:1635px;top:467px;font-size:12px;letter-spacing:0.35px;overflow:hidden;width:121px;">-141.93pF</div>
<div class="t" style="right:141px;top:485px;font-size:12px;letter-spacing:0.35px;margin-right:-0.35px;">Admittance</div>
<div class="t" style="left:1635px;top:485px;font-size:12px;letter-spacing:0.35px;overflow:hidden;width:121px;">22.94m - j4.5658mS</div>
<div class="t" style="left:1532px;top:521px;font-size:12px;letter-spacing:0.35px;">S21 info</div>
<div class="t" style="right:141px;top:539px;font-size:12px;letter-spacing:0.35px;margin-right:-0.35px;">Real Imag</div>
<div class="t" style="left:1635px;top:539px;font-size:12px;letter-spacing:0.35px;overflow:hidden;width:121px;">48.354m+ j772.95m</div>
<div class="t" style="right:141px;top:557px;font-size:12px;letter-spacing:0.35px;margin-right:-0.35px;">Gain</div>
<div class="t" style="left:1635px;top:557px;font-size:12px;letter-spacing:0.35px;overflow:hidden;width:121px;">-2.22dB</div>
<div class="t" style="right:141px;top:575px;font-size:12px;letter-spacing:0.35px;margin-right:-0.35px;">Polar</div>
<div class="t" style="left:1635px;top:575px;font-size:12px;letter-spacing:0.35px;overflow:hidden;width:121px;">774.46m+86.4204°</div>
<div class="t" style="right:141px;top:593px;font-size:12px;letter-spacing:0.35px;margin-right:-0.35px;">Quality Factor</div>
<div class="t" style="left:1635px;top:593px;font-size:12px;letter-spacing:0.35px;overflow:hidden;width:121px;">1.402</div>
<div class="t" style="right:141px;top:611px;font-size:12px;letter-spacing:0.35px;margin-right:-0.35px;">Group Delay</div>
<div class="t" style="left:1635px;top:611px;font-size:12px;letter-spacing:0.35px;overflow:hidden;width:121px;">248.91us</div>
<div class="t" style="right:141px;top:629px;font-size:12px;letter-spacing:0.35px;margin-right:-0.35px;">Z shunt</div>
<div class="t" style="left:1635px;top:629px;font-size:12px;letter-spacing:0.35px;overflow:hidden;width:121px;">-9.172 + j12.86</div>
<div class="t" style="right:141px;top:647px;font-size:12px;letter-spacing:0.35px;margin-right:-0.35px;">|Z| shunt</div>
<div class="t" style="left:1635px;top:647px;font-size:12px;letter-spacing:0.35px;overflow:hidden;width:121px;">15.7924</div>
<div class="t" style="right:141px;top:665px;font-size:12px;letter-spacing:0.35px;margin-right:-0.35px;">Z series</div>
<div class="t" style="left:1635px;top:665px;font-size:12px;letter-spacing:0.35px;overflow:hidden;width:121px;">-91.94 - j128.9</div>
<div class="t" style="right:141px;top:683px;font-size:12px;letter-spacing:0.35px;margin-right:-0.35px;">|Z| series</div>
<div class="t" style="left:1635px;top:683px;font-size:12px;letter-spacing:0.35px;overflow:hidden;width:121px;">158.304</div>
<div class="r" style="left:234px;top:916px;width:29px;height:23px;background:#e1e1e1;border:1px solid #adadad;"></div>
<svg class="r" style="left:238.8px;top:918.5px;" width="19" height="18" viewBox="0 0 19 18"><path d="M7.5 3 Q7.5 1.2 10 1.2 Q12.5 1.2 12.5 3Z" fill="#000"/><rect x="2.7" y="3" width="14" height="1.8" fill="#000"/><rect x="3.6" y="5" width="1.7" height="11" fill="#000"/><rect x="9" y="5" width="1.6" height="11" fill="#000"/><rect x="14.2" y="5" width="1.7" height="11" fill="#000"/><rect x="3.6" y="14.4" width="12.3" height="1.6" fill="#000"/></svg>
<div class="r" style="left:278px;top:919px;width:1471px;height:15px;background:#e7eaea;border:1px solid #d6d6d6;"></div>
<div class="r" style="left:1738px;top:915px;width:10px;height:22px;background:#0078d7;"></div>
<div class="r" style="left:1px;top:947px;width:1761px;height:1px;background:#d7d7d7;"></div>
<div class="r" style="left:1px;top:966px;width:1761px;height:1px;background:#d7d7d7;"></div>
<div class="r" style="left:180px;top:949px;width:1px;height:16px;background:#d7d7d7;"></div>
<div class="r" style="left:330px;top:949px;width:1px;height:16px;background:#d7d7d7;"></div>
<div class="r" style="left:460px;top:949px;width:1px;height:16px;background:#d7d7d7;"></div>
<div class="r" style="left:590px;top:949px;width:1px;height:16px;background:#d7d7d7;"></div>
<div class="r" style="left:720px;top:949px;width:1px;height:16px;background:#d7d7d7;"></div>
<div class="r" style="left:940px;top:949px;width:1px;height:16px;background:#d7d7d7;"></div>
<div class="r" style="left:180px;top:968px;width:1px;height:16px;background:#d7d7d7;"></div>
<div class="r" style="left:330px;top:968px;width:1px;height:16px;background:#d7d7d7;"></div>
<div class="r" style="left:460px;top:968px;width:1px;height:16px;background:#d7d7d7;"></div>
<div class="r" style="left:590px;top:968px;width:1px;height:16px;background:#d7d7d7;"></div>
<div class="r" style="left:720px;top:968px;width:1px;height:16px;background:#d7d7d7;"></div>
<div class="r" style="left:880px;top:968px;width:1px;height:16px;background:#d7d7d7;"></div>
<div class="r" style="left:1100px;top:968px;width:1px;height:16px;background:#d7d7d7;"></div>
<div class="t" style="left:-110px;width:400px;text-align:center;top:948px;font-size:12px;letter-spacing:0.45px;">Win-10 (v10.0) pl-PL ','</div>
<div class="t" style="left:56.5px;width:400px;text-align:center;top:948px;font-size:12px;letter-spacing:0.45px;">0 points/sec</div>
<div class="t" style="left:196.5px;width:400px;text-align:center;top:948px;font-size:12px;letter-spacing:0.45px;">Bat 4,170 V</div>
<div class="r" style="left:461px;top:948px;width:129px;height:18px;overflow:hidden">
<div class="t" style="left:2px;top:0px;font-size:12px;letter-spacing:0.45px;">Threshold 300,0001 M</div>
</div>
<div class="t" style="left:456.5px;width:400px;text-align:center;top:948px;font-size:12px;letter-spacing:0.45px;">BW 0</div>
<div class="t" style="left:631.5px;width:400px;text-align:center;top:948px;font-size:12px;letter-spacing:0.45px;">NanoVNA-H4 1.2.20</div>
<div class="t" style="left:-110px;width:400px;text-align:center;top:967px;font-size:12px;letter-spacing:0.45px;">pon. 06 lis 2023 21:01:10</div>
<div class="t" style="left:205px;top:967px;font-size:12px;letter-spacing:0.45px;">Points</div>
<div class="t" style="left:259px;top:967px;font-size:12px;letter-spacing:0.45px;">0 /</div>
<div class="t" style="left:287px;top:967px;font-size:12px;letter-spacing:0.45px;">401</div>
<div class="t" style="left:196.5px;width:400px;text-align:center;top:967px;font-size:12px;letter-spacing:0.45px;">Seg 1 / 1</div>
<div class="t" style="left:326.5px;width:400px;text-align:center;top:967px;font-size:12px;letter-spacing:0.45px;">Hist 1 / 256</div>
<div class="t" style="left:456.5px;width:400px;text-align:center;top:967px;font-size:12px;letter-spacing:0.45px;">Scans 1</div>
<div class="t" style="left:601.5px;width:400px;text-align:center;top:967px;font-size:12px;letter-spacing:0.45px;">Step 37,5 Hz</div>
<div class="t" style="left:791.5px;width:400px;text-align:center;top:967px;font-size:12px;letter-spacing:0.45px;">libusb-1.0.dll v1.0.23.11397</div>
<svg class="r" style="left:1750px;top:973px;" width="11" height="11" viewBox="0 0 11 11"><rect x="8" y="2" width="2" height="2" fill="#b0b0b0"/><rect x="8" y="5" width="2" height="2" fill="#b0b0b0"/><rect x="5" y="5" width="2" height="2" fill="#b0b0b0"/><rect x="8" y="8" width="2" height="2" fill="#b0b0b0"/><rect x="5" y="8" width="2" height="2" fill="#b0b0b0"/><rect x="2" y="8" width="2" height="2" fill="#b0b0b0"/></svg>
</body></html>
